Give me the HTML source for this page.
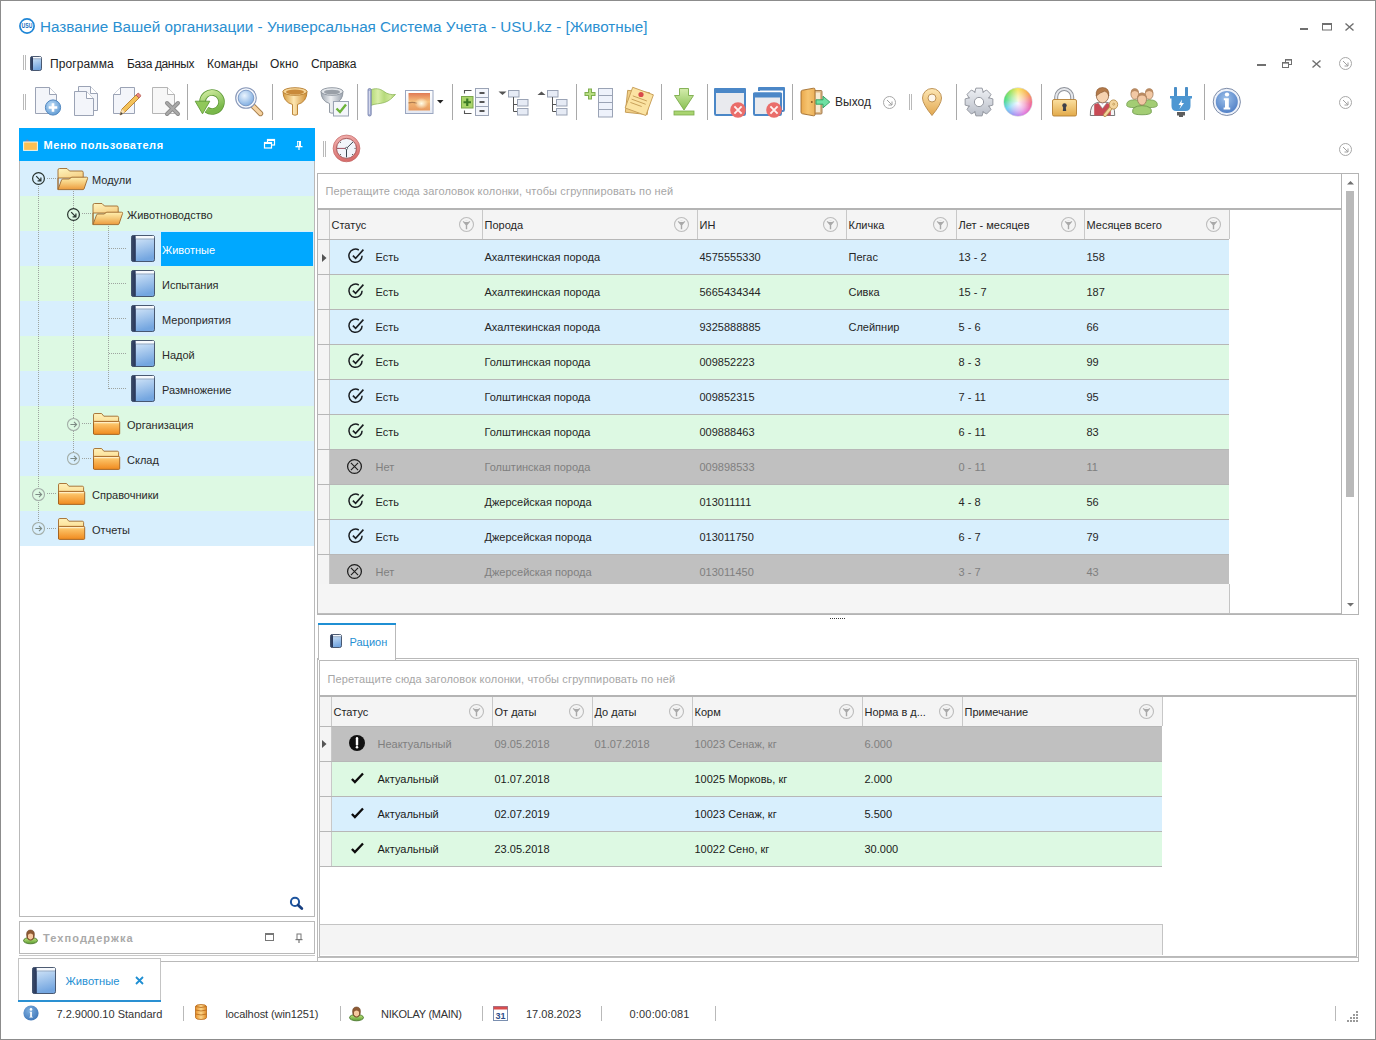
<!DOCTYPE html>
<html><head><meta charset="utf-8"><style>
html,body{margin:0;padding:0;width:1376px;height:1040px;overflow:hidden;background:#fff;}
body{position:relative;font-family:"Liberation Sans",sans-serif;}
.t{position:absolute;white-space:pre;}
svg{overflow:visible}
</style></head><body>
<div style="position:absolute;left:0px;top:0px;width:1376px;height:1040px;background:#fff"></div>
<div style="position:absolute;left:0px;top:0px;width:1376px;height:1px;background:#8c8c8c"></div>
<div style="position:absolute;left:0px;top:1039px;width:1376px;height:1px;background:#8c8c8c"></div>
<div style="position:absolute;left:0px;top:0px;width:1px;height:1040px;background:#8c8c8c"></div>
<div style="position:absolute;left:1375px;top:0px;width:1px;height:1040px;background:#8c8c8c"></div>
<svg style="position:absolute;left:19px;top:18px;" width="16" height="16" viewBox="0 0 16 16"><circle cx="8" cy="8" r="7.1" fill="none" stroke="#1f86d6" stroke-width="1.7"/><text x="2.6" y="10.2" font-family="Liberation Sans" font-weight="bold" font-size="6.6" fill="#1a6ec0" textLength="10.8" lengthAdjust="spacingAndGlyphs">USU</text></svg>
<div class="t" style="left:40px;top:19.09px;font-size:15.25px;line-height:15.25px;color:#2a8fd1;font-weight:normal;">Название Вашей организации - Универсальная Система Учета - USU.kz - [Животные]</div>
<div style="position:absolute;left:1300px;top:28px;width:8px;height:2px;background:#6f6f6f"></div><svg style="position:absolute;left:1322px;top:23px;" width="10" height="8" viewBox="0 0 10 8"><rect x="0.5" y="0.5" width="9" height="6.5" fill="none" stroke="#6f6f6f" stroke-width="1"/><rect x="0" y="0" width="10" height="2" fill="#6f6f6f"/></svg><svg style="position:absolute;left:1345px;top:23px;" width="9" height="8" viewBox="0 0 9 8"><path d="M0.5 0.5L8.5 7.5M8.5 0.5L0.5 7.5" stroke="#6f6f6f" stroke-width="1.4"/></svg>
<div style="position:absolute;left:23px;top:55px;width:1px;height:15px;background:#b9b9b9"></div><div style="position:absolute;left:25px;top:55px;width:1px;height:15px;background:#b9b9b9"></div>
<svg style="position:absolute;left:30px;top:56px;" width="12" height="15" viewBox="0 0 12 15"><defs><linearGradient id="bkmenu" x1="0" y1="0" x2="0.25" y2="1"><stop offset="0" stop-color="#dcecfb"/><stop offset="1" stop-color="#74a6e0"/></linearGradient><linearGradient id="bkmenus" x1="0" y1="0" x2="1" y2="0"><stop offset="0" stop-color="#3a4a68"/><stop offset="1" stop-color="#27365a"/></linearGradient></defs><rect x="0.5" y="0.5" width="11" height="14" rx="1.8" fill="url(#bkmenu)" stroke="#3b4a62" stroke-width="0.9"/><rect x="0.5" y="0.5" width="2.5" height="14" rx="1.2" fill="url(#bkmenus)"/><rect x="3.0" y="1" width="8.0" height="1.5" fill="#f6f9fd"/><path d="M3.0 2.8H11" stroke="#8597ae" stroke-width="0.7"/></svg>
<div class="t" style="left:50px;top:57.84px;font-size:12px;line-height:12px;color:#222222;font-weight:normal;letter-spacing:0.1px">Программа</div>
<div class="t" style="left:127px;top:57.84px;font-size:12px;line-height:12px;color:#222222;font-weight:normal;letter-spacing:-0.4px">База данных</div>
<div class="t" style="left:207px;top:57.84px;font-size:12px;line-height:12px;color:#222222;font-weight:normal;letter-spacing:0px">Команды</div>
<div class="t" style="left:270px;top:57.84px;font-size:12px;line-height:12px;color:#222222;font-weight:normal;letter-spacing:0.15px">Окно</div>
<div class="t" style="left:311px;top:57.84px;font-size:12px;line-height:12px;color:#222222;font-weight:normal;letter-spacing:-0.28px">Справка</div>
<div style="position:absolute;left:1257px;top:64px;width:9px;height:2px;background:#707070"></div><svg style="position:absolute;left:1282px;top:59px;" width="10" height="9" viewBox="0 0 10 9"><rect x="3.5" y="0.5" width="6" height="5" fill="none" stroke="#707070"/><rect x="3" y="0" width="7" height="1.6" fill="#707070"/><rect x="0.5" y="3.5" width="6" height="5" fill="#fff" stroke="#707070"/><rect x="0" y="3" width="7" height="1.6" fill="#707070"/></svg><svg style="position:absolute;left:1312px;top:60px;" width="9" height="8" viewBox="0 0 9 8"><path d="M0.5 0.5L8.5 7.5M8.5 0.5L0.5 7.5" stroke="#707070" stroke-width="1.4"/></svg><svg style="position:absolute;left:1339px;top:57px;" width="13" height="13" viewBox="0 0 13 13"><circle cx="6.5" cy="6.5" r="6" fill="none" stroke="#a8a8a8" stroke-width="1"/><path d="M4 4L9 9M9 5.5V9H5.5" fill="none" stroke="#a0a0a0" stroke-width="1"/></svg>
<div style="position:absolute;left:23px;top:94px;width:1px;height:16px;background:#b9b9b9"></div><div style="position:absolute;left:25px;top:94px;width:1px;height:16px;background:#b9b9b9"></div><svg style="position:absolute;left:34px;top:86px;" width="30" height="31" viewBox="0 0 30 31"><path d="M1.5 1.5H15.5L22.5 8.5V27.5H1.5Z" fill="#f3f5fa" stroke="#9ba3b5" stroke-width="1"/><path d="M15.5 1.5V8.5H22.5" fill="#fff" stroke="#9ba3b5" stroke-width="1"/><defs><radialGradient id="plc" cx="0.4" cy="0.35" r="0.7"><stop offset="0" stop-color="#bcdcf7"/><stop offset="1" stop-color="#5f9ad3"/></radialGradient></defs><circle cx="19" cy="21.5" r="7.6" fill="url(#plc)" stroke="#4f86bf" stroke-width="1"/><path d="M19 17.2V25.8M14.7 21.5H23.3" stroke="#fff" stroke-width="2.6"/></svg><svg style="position:absolute;left:73px;top:85px;" width="28" height="32" viewBox="0 0 28 32"><path d="M5.5 1.5H17.5L24.5 8.5V25.5H5.5Z" fill="#f3f5fa" stroke="#9ba3b5" stroke-width="1"/><path d="M17.5 1.5V8.5H24.5" fill="#fff" stroke="#9ba3b5" stroke-width="1"/><path d="M1.5 6.5H13.5L20.5 13.5V30.5H1.5Z" fill="#f3f5fa" stroke="#9ba3b5" stroke-width="1"/><path d="M13.5 6.5V13.5H20.5" fill="#fff" stroke="#9ba3b5" stroke-width="1"/></svg><svg style="position:absolute;left:112px;top:86px;" width="30" height="32" viewBox="0 0 30 32"><path d="M8.5 1.5H22.5V27.5H1.5V8.5Z" fill="#f3f5fa" stroke="#9ba3b5" stroke-width="1"/><path d="M8.5 1.5V8.5H1.5" fill="#fff" stroke="#9ba3b5" stroke-width="1"/><path d="M8 29L10 23L24 9L27 12L13 26Z" fill="#f3c25a" stroke="#b77c2a" stroke-width="0.9"/><path d="M24 9L27 12L28.5 10.5Q29 9.5 28 8.5L27 7.5Q26 7 25.5 7.5Z" fill="#e8877e" stroke="#b55a52" stroke-width="0.8"/><path d="M8 29L10 23L13 26Z" fill="#f7e0b5"/><path d="M8 29L9 26L11 28Z" fill="#444"/></svg><svg style="position:absolute;left:151px;top:86px;" width="30" height="32" viewBox="0 0 30 32"><path d="M1.5 1.5H16.5L23.5 8.5V27.5H1.5Z" fill="#f7f7f7" stroke="#b5b5b5" stroke-width="1"/><path d="M16.5 1.5V8.5H23.5" fill="#fff" stroke="#b5b5b5" stroke-width="1"/><path d="M16 17L27 28M27 17L16 28" stroke="#8b8b8b" stroke-width="4" stroke-linecap="round"/><path d="M16 17L27 28M27 17L16 28" stroke="#a9a9a9" stroke-width="2.2" stroke-linecap="round"/></svg><div style="position:absolute;left:187px;top:84px;width:1px;height:36px;background:#a9a9a9"></div><svg style="position:absolute;left:194px;top:88px;" width="32" height="29" viewBox="0 0 32 29"><defs><linearGradient id="rfg" x1="0" y1="0" x2="0.4" y2="1"><stop offset="0" stop-color="#cdea9c"/><stop offset="1" stop-color="#79b84a"/></linearGradient></defs><path d="M8.5 14A9.5 9.5 0 1 1 12.6 21.8" fill="none" stroke="#5f9a38" stroke-width="6.6"/><path d="M8.5 14A9.5 9.5 0 1 1 12.6 21.8" fill="none" stroke="url(#rfg)" stroke-width="4.9"/><path d="M1.2 13.2H15.8L8.5 25.8Z" fill="#90c85a" stroke="#5f9a38" stroke-width="0.9" stroke-linejoin="round"/></svg><svg style="position:absolute;left:234px;top:86px;" width="30" height="31" viewBox="0 0 30 31"><defs><radialGradient id="lns" cx="0.4" cy="0.35" r="0.7"><stop offset="0" stop-color="#eaf4fe"/><stop offset="1" stop-color="#7aaae0"/></radialGradient></defs><path d="M18.5 19.5L26.5 27.5" stroke="#a8804e" stroke-width="5.4" stroke-linecap="round"/><path d="M18.5 19.5L26.5 27.5" stroke="#f6d3a2" stroke-width="3.4" stroke-linecap="round"/><circle cx="12" cy="12" r="10.3" fill="#f3f6fb" stroke="#8797b8" stroke-width="1.1"/><circle cx="12" cy="12" r="7.8" fill="url(#lns)" stroke="#6d8dbc" stroke-width="0.8"/></svg><div style="position:absolute;left:272px;top:84px;width:1px;height:36px;background:#a9a9a9"></div><svg style="position:absolute;left:282px;top:87px;" width="26" height="30" viewBox="0 0 26 30"><defs><linearGradient id="fun" x1="0" y1="0" x2="1" y2="0"><stop offset="0" stop-color="#d59a3e"/><stop offset="0.45" stop-color="#fde6b0"/><stop offset="1" stop-color="#cf8e34"/></linearGradient></defs><path d="M1 4.5Q1 15 10.5 17.5V27.5Q13 29 15.5 27.5V17.5Q25 15 25 4.5Z" fill="url(#fun)" stroke="#b47a2c" stroke-width="0.9"/><ellipse cx="13" cy="4.5" rx="12" ry="3.8" fill="#f7d79a" stroke="#b47a2c" stroke-width="0.9"/><ellipse cx="13" cy="5" rx="9" ry="2.4" fill="#c98a3a"/></svg><svg style="position:absolute;left:320px;top:86px;" width="30" height="31" viewBox="0 0 30 31"><defs><linearGradient id="fun2" x1="0" y1="0" x2="1" y2="0"><stop offset="0" stop-color="#9ea6b0"/><stop offset="0.45" stop-color="#eef0f3"/><stop offset="1" stop-color="#9aa2ad"/></linearGradient></defs><path d="M1 5.5Q1 15 9.5 17.5V26.5Q12 28 14.5 26.5V17.5Q23 15 23 5.5Z" fill="url(#fun2)" stroke="#8a929c" stroke-width="0.9"/><ellipse cx="12" cy="5.5" rx="11" ry="3.8" fill="#e4e7eb" stroke="#8a929c" stroke-width="0.9"/><ellipse cx="12" cy="6" rx="8" ry="2.3" fill="#9aa0a8"/><rect x="13.5" y="15.5" width="15" height="14.5" fill="#f4f6fa" stroke="#9aa3b3" stroke-width="1"/><path d="M16.5 22.5L20 26L26 18.5" fill="none" stroke="#6cb33a" stroke-width="2.4"/></svg><div style="position:absolute;left:357px;top:84px;width:1px;height:36px;background:#a9a9a9"></div><svg style="position:absolute;left:366px;top:87px;" width="31" height="30" viewBox="0 0 31 30"><defs><linearGradient id="flg" x1="0" y1="0" x2="1" y2="0"><stop offset="0" stop-color="#b2d874"/><stop offset="0.3" stop-color="#d9eea8"/><stop offset="0.55" stop-color="#b6da7c"/><stop offset="0.8" stop-color="#cfe79a"/><stop offset="1" stop-color="#a5cf68"/></linearGradient></defs><path d="M4.5 3C9 0.8 14 1.5 18 4.5C21 7 25 8 29.5 7.5C26.5 10.5 23.5 14 18.5 15.5C13.5 17 9.5 16.5 4.5 18.5Z" fill="url(#flg)" stroke="#8fb85c" stroke-width="0.8"/><rect x="2" y="1.5" width="3.2" height="27.5" rx="1.5" fill="#a9b2d6" stroke="#6e7aa6" stroke-width="0.8"/><path d="M3.3 4V27" stroke="#e6e9f5" stroke-width="0.9"/></svg><svg style="position:absolute;left:405px;top:90px;" width="29" height="24" viewBox="0 0 29 24"><defs><linearGradient id="img" x1="0" y1="0" x2="0" y2="1"><stop offset="0" stop-color="#e07a56"/><stop offset="0.5" stop-color="#f7c27e"/><stop offset="0.62" stop-color="#f0b070"/><stop offset="1" stop-color="#e89a5e"/></linearGradient><radialGradient id="sun" cx="0.6" cy="0.6" r="0.32"><stop offset="0" stop-color="#fffde8"/><stop offset="1" stop-color="#fffde8" stop-opacity="0"/></radialGradient><linearGradient id="frm" x1="0" y1="0" x2="0" y2="1"><stop offset="0" stop-color="#ffffff"/><stop offset="1" stop-color="#e4e8f2"/></linearGradient></defs><rect x="0.5" y="0.5" width="27.5" height="23" fill="url(#frm)" stroke="#9aa6c0" stroke-width="1"/><rect x="3.5" y="3" width="21.5" height="17.5" fill="url(#img)"/><path d="M3.5 12.8Q8 11.8 12 13.2" stroke="#7a4a30" stroke-width="1.2" fill="none" opacity="0.55"/><rect x="3.5" y="3" width="21.5" height="17.5" fill="url(#sun)"/></svg><svg style="position:absolute;left:437px;top:100px;" width="7" height="4" viewBox="0 0 7 4"><path d="M0 0H6.5L3.25 3.5Z" fill="#222"/></svg><div style="position:absolute;left:452px;top:84px;width:1px;height:36px;background:#a9a9a9"></div><svg style="position:absolute;left:460px;top:87px;" width="30" height="30" viewBox="0 0 30 30"><path d="M11.5 3.5H4.5V6.5M4.5 23.5V26.5H11.5" fill="none" stroke="#555" stroke-width="1.1"/><rect x="1.5" y="9.5" width="11.5" height="11.5" fill="#a9d46a" stroke="#7aa64a" stroke-width="1"/><path d="M7.25 11.5V19M3.5 15.25H11" stroke="#3c7a26" stroke-width="2.2"/><rect x="15.5" y="1.5" width="13" height="27" fill="#f3f5fb" stroke="#9aa3b5" stroke-width="1"/><path d="M15.5 10.5H28.5M15.5 19.5H28.5" stroke="#9aa3b5" stroke-width="1"/><path d="M19.5 6H24.5M19.5 15H24.5M19.5 24H24.5" stroke="#555" stroke-width="1.8"/></svg><svg style="position:absolute;left:498px;top:89px;" width="31" height="27" viewBox="0 0 31 27"><path d="M0.5 2.5H8.5L4.5 6Z" fill="#555"/><rect x="10.5" y="1.5" width="10.5" height="6.5" fill="#e6ebf5" stroke="#9aa3b5" stroke-width="1"/><path d="M15.5 8V22.5M15.5 15.5H19.5M15.5 22.5H19.5" fill="none" stroke="#555" stroke-width="1"/><rect x="19.5" y="10.5" width="10.5" height="6.5" fill="#e6ebf5" stroke="#9aa3b5" stroke-width="1"/><rect x="19.5" y="19.5" width="10.5" height="6.5" fill="#e6ebf5" stroke="#9aa3b5" stroke-width="1"/></svg><svg style="position:absolute;left:537px;top:89px;" width="31" height="27" viewBox="0 0 31 27"><path d="M0.5 6H8.5L4.5 2.5Z" fill="#555"/><rect x="10.5" y="1.5" width="10.5" height="6.5" fill="#e6ebf5" stroke="#9aa3b5" stroke-width="1"/><path d="M15.5 8V22.5M15.5 15.5H19.5M15.5 22.5H19.5" fill="none" stroke="#555" stroke-width="1"/><rect x="19.5" y="10.5" width="10.5" height="6.5" fill="#e6ebf5" stroke="#9aa3b5" stroke-width="1"/><rect x="19.5" y="19.5" width="10.5" height="6.5" fill="#e6ebf5" stroke="#9aa3b5" stroke-width="1"/></svg><div style="position:absolute;left:576px;top:84px;width:1px;height:36px;background:#a9a9a9"></div><svg style="position:absolute;left:583px;top:87px;" width="31" height="31" viewBox="0 0 31 31"><path d="M7 1.5V12.5M1.5 7H12.5" stroke="#7fae4f" stroke-width="4"/><path d="M7 2.5V11.5M2.5 7H11.5" stroke="#b8de82" stroke-width="2"/><rect x="15.5" y="1.5" width="14" height="28.5" fill="#eef2fb" stroke="#9aa3b5" stroke-width="1"/><path d="M15.5 8.5H29.5M15.5 15.5H29.5M15.5 22.5H29.5" stroke="#9aa3b5" stroke-width="1"/></svg><svg style="position:absolute;left:623px;top:87px;" width="31" height="30" viewBox="0 0 31 30"><g transform="rotate(6 15 15)"><rect x="3.5" y="4.5" width="22" height="22" fill="#f1cf86" stroke="#c49a52" stroke-width="0.9"/></g><g transform="rotate(20 15 15)"><rect x="5" y="3" width="22" height="22" fill="#fbe3a2" stroke="#c9a05a" stroke-width="0.9"/><path d="M8 11H23M8 14.5H23M8 18H20" stroke="#c8a15a" stroke-width="0.9"/></g><circle cx="18" cy="7.5" r="2.6" fill="#d94a4a"/></svg><div style="position:absolute;left:661px;top:84px;width:1px;height:36px;background:#a9a9a9"></div><svg style="position:absolute;left:673px;top:87px;" width="22" height="29" viewBox="0 0 22 29"><defs><linearGradient id="dlg" x1="0" y1="0" x2="0" y2="1"><stop offset="0" stop-color="#d4ecac"/><stop offset="1" stop-color="#88c052"/></linearGradient></defs><path d="M6.5 1.5H15.5V8.5H20.5L11 23L1.5 8.5H6.5Z" fill="url(#dlg)" stroke="#7aab4a" stroke-width="0.9" stroke-linejoin="round"/><rect x="1" y="24" width="20" height="4" fill="#a9d470" stroke="#7aab4a" stroke-width="0.8"/></svg><div style="position:absolute;left:707px;top:84px;width:1px;height:36px;background:#a9a9a9"></div><svg style="position:absolute;left:713px;top:87px;" width="34" height="32" viewBox="0 0 34 32"><rect x="2" y="2" width="30" height="26" rx="1.2" fill="#e9eaee" stroke="#4b87c7" stroke-width="2"/><rect x="1" y="1" width="32" height="5" rx="1.2" fill="#4b87c7"/><circle cx="25" cy="23" r="7.8" fill="#ea6d6a"/><path d="M21.4 19.4L28.6 26.6M28.6 19.4L21.4 26.6" stroke="#fff1f0" stroke-width="1.9"/></svg><svg style="position:absolute;left:752px;top:86px;" width="34" height="33" viewBox="0 0 34 33"><rect x="7" y="2" width="25" height="23" rx="1.2" fill="#f4f6fa" stroke="#4b87c7" stroke-width="2"/><rect x="6" y="1" width="27" height="3.5" rx="1.2" fill="#4b87c7"/><rect x="0" y="5" width="31" height="2" fill="#fff"/><rect x="2" y="7.5" width="27" height="21.5" rx="1.2" fill="#e9eaee" stroke="#4b87c7" stroke-width="2"/><rect x="1" y="6.5" width="29" height="5" rx="1.2" fill="#4b87c7"/><circle cx="22" cy="24" r="7.8" fill="#ea6d6a"/><path d="M18.4 20.4L25.6 27.6M25.6 20.4L18.4 27.6" stroke="#fff1f0" stroke-width="1.9"/></svg><div style="position:absolute;left:792px;top:84px;width:1px;height:36px;background:#a9a9a9"></div><svg style="position:absolute;left:799px;top:87px;" width="33" height="30" viewBox="0 0 33 30"><defs><linearGradient id="dor" x1="0" y1="0" x2="1" y2="0"><stop offset="0" stop-color="#e9a84c"/><stop offset="0.5" stop-color="#f6c470"/><stop offset="1" stop-color="#eab05a"/></linearGradient></defs><rect x="14.5" y="3.5" width="8.5" height="23.5" rx="1" fill="#dcb98a" stroke="#9e7444" stroke-width="0.9"/><rect x="16.5" y="5.5" width="4.5" height="19.5" fill="#f7ead2"/><path d="M2 5Q2 3.5 3.5 3.2L14.5 1.2Q16 1 16 2.5V27.5Q16 29 14.5 28.8L3.5 26.8Q2 26.5 2 25Z" fill="url(#dor)" stroke="#a06c2c" stroke-width="0.9"/><circle cx="12.8" cy="15" r="1" fill="#8a5a24"/><path d="M17 12.8H24V9.2L30.8 15L24 20.8V17.2H17Z" fill="#6fe0a2" stroke="#2e9c5e" stroke-width="0.9" stroke-linejoin="round"/></svg><div class="t" style="left:835px;top:95.84px;font-size:12px;line-height:12px;color:#2a2a2a;font-weight:normal;">Выход</div><svg style="position:absolute;left:883px;top:96px;" width="13" height="13" viewBox="0 0 13 13"><circle cx="6.5" cy="6.5" r="6" fill="none" stroke="#a8a8a8" stroke-width="1"/><path d="M4 4L9 9M9 5.5V9H5.5" fill="none" stroke="#a0a0a0" stroke-width="1"/></svg><div style="position:absolute;left:909px;top:94px;width:1px;height:16px;background:#b9b9b9"></div><div style="position:absolute;left:911px;top:94px;width:1px;height:16px;background:#b9b9b9"></div><svg style="position:absolute;left:921px;top:87px;" width="23" height="30" viewBox="0 0 23 30"><defs><linearGradient id="ping" x1="0" y1="0" x2="0" y2="1"><stop offset="0" stop-color="#fde7b4"/><stop offset="1" stop-color="#e2a74f"/></linearGradient></defs><path d="M11 28.5Q1.5 17 1.5 11A9.5 9.5 0 0 1 20.5 11Q20.5 17 11 28.5Z" fill="url(#ping)" stroke="#b88a4a" stroke-width="0.9"/><circle cx="11" cy="11" r="4" fill="#fdf6ea" stroke="#b88a4a" stroke-width="0.9"/></svg><div style="position:absolute;left:956px;top:84px;width:1px;height:36px;background:#a9a9a9"></div><svg style="position:absolute;left:964px;top:87px;" width="30" height="30" viewBox="0 0 30 30"><defs><linearGradient id="gr" x1="0" y1="0" x2="0" y2="1"><stop offset="0" stop-color="#eef0f4"/><stop offset="1" stop-color="#b9bec8"/></linearGradient></defs><path d="M28.86 11.90L28.86 18.10L24.59 19.28L24.81 18.75L26.99 22.61L22.61 26.99L18.75 24.81L19.28 24.59L18.10 28.86L11.90 28.86L10.72 24.59L11.25 24.81L7.39 26.99L3.01 22.61L5.19 18.75L5.41 19.28L1.14 18.10L1.14 11.90L5.41 10.72L5.19 11.25L3.01 7.39L7.39 3.01L11.25 5.19L10.72 5.41L11.90 1.14L18.10 1.14L19.28 5.41L18.75 5.19L22.61 3.01L26.99 7.39L24.81 11.25L24.59 10.72Z" fill="url(#gr)" stroke="#8c9099" stroke-width="0.9" stroke-linejoin="round"/><circle cx="15" cy="15" r="4.6" fill="#fff" stroke="#8c9099" stroke-width="0.9"/></svg><div style="position:absolute;left:1004px;top:88px;width:28px;height:28px;border-radius:50%;background:radial-gradient(circle at 50% 55%, rgba(255,255,255,0.95) 0, rgba(255,255,255,0.55) 35%, rgba(255,255,255,0) 72%), conic-gradient(from 0deg, #f9e45a, #f7a24a 50deg, #ec4f8c 100deg, #d85ad6 150deg, #8a7cf0 200deg, #4cc6f0 240deg, #3ad873 280deg, #8ee05a 320deg, #f9e45a);box-shadow:0 0 0 0.5px #c9c9d2"></div><div style="position:absolute;left:1041px;top:84px;width:1px;height:36px;background:#a9a9a9"></div><svg style="position:absolute;left:1051px;top:86px;" width="27" height="31" viewBox="0 0 27 31"><defs><linearGradient id="lk" x1="0" y1="0" x2="0" y2="1"><stop offset="0" stop-color="#fbe0a0"/><stop offset="1" stop-color="#e2aa4a"/></linearGradient></defs><path d="M5.2 14V11A8 8 0 0 1 21.2 11V14" fill="none" stroke="#8e929a" stroke-width="4"/><path d="M5.2 14V11A8 8 0 0 1 21.2 11V14" fill="none" stroke="#e6e8ec" stroke-width="2"/><rect x="1.5" y="13.5" width="24" height="16.5" rx="1.5" fill="url(#lk)" stroke="#b47f34" stroke-width="0.9"/><circle cx="13.5" cy="19.5" r="2.2" fill="#3d3f48"/><path d="M12.3 20H14.7L15.2 25H11.8Z" fill="#3d3f48"/></svg><svg style="position:absolute;left:1089px;top:86px;" width="31" height="31" viewBox="0 0 31 31"><path d="M1.3 29.5Q1 19 7 17Q10 16 13.5 16Q17 16 20 17Q26 19 25.7 29.5Z" fill="#f4f4f4" stroke="#6a6a6a" stroke-width="0.9"/><path d="M5.2 29.5V18.5Q9 16.5 13.5 16.5Q18 16.5 21.8 18.5V29.5Z" fill="#c84a55"/><path d="M9 16.8L13.5 22.5L18 16.8Q13.5 15.5 9 16.8Z" fill="#ffffff" stroke="#8a8a8a" stroke-width="0.6"/><path d="M11.5 16.3L13.5 19L15.5 16.3Z" fill="#d9d0e8"/><ellipse cx="13.5" cy="9.5" rx="6.2" ry="7.3" fill="#f6d2b0" stroke="#8f6446" stroke-width="0.8"/><path d="M7.3 10Q6.2 1.6 13.5 1.6Q20.8 1.6 19.7 10Q19 5.6 15.5 5.2Q11 6.5 7.3 10Z" fill="#b47a4a" stroke="#8a5a34" stroke-width="0.6"/><path d="M16 29L23 20.5" stroke="#b8904e" stroke-width="3.8" stroke-linecap="round"/><path d="M16 29L23 20.5" stroke="#f3d49c" stroke-width="2.2" stroke-linecap="round"/><ellipse cx="24.5" cy="18.5" rx="4.2" ry="4.6" fill="#f3d49c" stroke="#b8904e" stroke-width="0.9"/><circle cx="24.7" cy="18.2" r="1" fill="none" stroke="#b8904e" stroke-width="0.7"/></svg><svg style="position:absolute;left:1126px;top:87px;" width="32" height="29" viewBox="0 0 32 29"><g transform="translate(8.8 10) scale(0.85)"><path d="M-9.5 10Q-10.5 3.5 0 3.2Q10.5 3.5 9.5 10Q9 12.5 0 12.5Q-9 12.5 -9.5 10Z" fill="#a3cd74" stroke="#6f9b4c" stroke-width="0.9"/><ellipse cx="0" cy="-3.5" rx="4.6" ry="6.2" fill="#f2c8a4" stroke="#9a7658" stroke-width="0.8"/><path d="M-4.6 -4Q-5.2 -10 0 -10Q5.2 -10 4.6 -4Q3.5 -7.2 0 -7.2Q-3.5 -7.2 -4.6 -4Z" fill="#b98a62"/></g><g transform="translate(23.2 10) scale(0.85)"><path d="M-9.5 10Q-10.5 3.5 0 3.2Q10.5 3.5 9.5 10Q9 12.5 0 12.5Q-9 12.5 -9.5 10Z" fill="#a3cd74" stroke="#6f9b4c" stroke-width="0.9"/><ellipse cx="0" cy="-3.5" rx="4.6" ry="6.2" fill="#f2c8a4" stroke="#9a7658" stroke-width="0.8"/><path d="M-4.6 -4Q-5.2 -10 0 -10Q5.2 -10 4.6 -4Q3.5 -7.2 0 -7.2Q-3.5 -7.2 -4.6 -4Z" fill="#b98a62"/></g><g transform="translate(16 15.5) scale(0.98)"><path d="M-9.5 10Q-10.5 3.5 0 3.2Q10.5 3.5 9.5 10Q9 12.5 0 12.5Q-9 12.5 -9.5 10Z" fill="#a3cd74" stroke="#6f9b4c" stroke-width="0.9"/><ellipse cx="0" cy="-3.5" rx="4.6" ry="6.2" fill="#f2c8a4" stroke="#9a7658" stroke-width="0.8"/><path d="M-4.6 -4Q-5.2 -10 0 -10Q5.2 -10 4.6 -4Q3.5 -7.2 0 -7.2Q-3.5 -7.2 -4.6 -4Z" fill="#b98a62"/></g></svg><svg style="position:absolute;left:1169px;top:86px;" width="24" height="32" viewBox="0 0 24 32"><rect x="5" y="1" width="3" height="10" rx="0.8" fill="#4a8ec7"/><rect x="16" y="1" width="3" height="10" rx="0.8" fill="#4a8ec7"/><path d="M1 10H23V12.5H21.5V20Q21.5 25 16.5 25H7.5Q2.5 25 2.5 20V12.5H1Z" fill="#4e97d2"/><path d="M13 13.5L9.5 19H12L10.5 23L15 17H12.5Z" fill="#fff"/><rect x="8" y="26" width="8" height="3.5" fill="#5d5d5d"/><rect x="10" y="29" width="4" height="2" fill="#5d5d5d"/></svg><div style="position:absolute;left:1204px;top:84px;width:1px;height:36px;background:#a9a9a9"></div><svg style="position:absolute;left:1212px;top:87px;" width="30" height="30" viewBox="0 0 30 30"><defs><radialGradient id="inf" cx="0.45" cy="0.35" r="0.7"><stop offset="0" stop-color="#9cc0ea"/><stop offset="1" stop-color="#4e7dc4"/></radialGradient></defs><circle cx="14.8" cy="14.9" r="13.6" fill="#eef2fa" stroke="#7d8ca8" stroke-width="1"/><circle cx="14.8" cy="14.9" r="11" fill="url(#inf)"/><ellipse cx="15" cy="7.6" rx="2.2" ry="2" fill="#fff"/><path d="M11.8 11.2H16.8V20.5H18.2V22.5H11.6V20.5H13V13.2H11.8Z" fill="#fff"/></svg><svg style="position:absolute;left:1339px;top:96px;" width="13" height="13" viewBox="0 0 13 13"><circle cx="6.5" cy="6.5" r="6" fill="none" stroke="#a8a8a8" stroke-width="1"/><path d="M4 4L9 9M9 5.5V9H5.5" fill="none" stroke="#a0a0a0" stroke-width="1"/></svg>
<div style="position:absolute;left:19px;top:128px;width:296px;height:789px;box-sizing:border-box;border:1px solid #b9b9b9;background:#fff"></div><div style="position:absolute;left:19px;top:128px;width:296px;height:33px;background:#00a8ff"></div><svg style="position:absolute;left:23px;top:138px;" width="15" height="13" viewBox="0 0 15 13"><path d="M1 4.2L4.2 1.2L8 4.2Z" fill="#8a7aa0" opacity="0.8"/><rect x="0.6" y="4" width="13.8" height="8.4" fill="#fbc054" stroke="#f4f6e8" stroke-width="1"/></svg><div class="t" style="left:43.5px;top:139.69px;font-size:11px;line-height:11px;color:#ffffff;font-weight:bold;letter-spacing:0.55px">Меню пользователя</div><svg style="position:absolute;left:264px;top:139px;" width="11" height="10" viewBox="0 0 11 10"><rect x="3.5" y="0.5" width="7" height="5.5" fill="none" stroke="#fff" stroke-width="1.2"/><rect x="0.5" y="3.5" width="7" height="5.5" fill="#00a8ff" stroke="#fff" stroke-width="1.2"/><rect x="0" y="3" width="8" height="2" fill="#fff"/><rect x="3" y="0" width="8" height="2" fill="#fff"/></svg><svg style="position:absolute;left:295px;top:141px;" width="8" height="9" viewBox="0 0 8 9"><rect x="2" y="0" width="4" height="5.5" fill="#fff"/><rect x="0.5" y="5" width="7" height="1.3" fill="#fff"/><rect x="3.4" y="6" width="1.2" height="3" fill="#fff"/><rect x="2.8" y="0.8" width="1" height="4" fill="#00a8ff"/></svg><div style="position:absolute;left:20px;top:161px;width:294px;height:35px;background:#d8effd"></div><div style="position:absolute;left:20px;top:196px;width:294px;height:35px;background:#ddf9e3"></div><div style="position:absolute;left:20px;top:231px;width:294px;height:35px;background:#d8effd"></div><div style="position:absolute;left:20px;top:266px;width:294px;height:35px;background:#ddf9e3"></div><div style="position:absolute;left:20px;top:301px;width:294px;height:35px;background:#d8effd"></div><div style="position:absolute;left:20px;top:336px;width:294px;height:35px;background:#ddf9e3"></div><div style="position:absolute;left:20px;top:371px;width:294px;height:35px;background:#d8effd"></div><div style="position:absolute;left:20px;top:406px;width:294px;height:35px;background:#ddf9e3"></div><div style="position:absolute;left:20px;top:441px;width:294px;height:35px;background:#d8effd"></div><div style="position:absolute;left:20px;top:476px;width:294px;height:35px;background:#ddf9e3"></div><div style="position:absolute;left:20px;top:511px;width:294px;height:35px;background:#d8effd"></div><div style="position:absolute;left:38px;top:186px;width:1px;height:344px;background:repeating-linear-gradient(to bottom,#9ea4a0 0 1px,transparent 1px 2px)"></div><div style="position:absolute;left:73px;top:191px;width:1px;height:269px;background:repeating-linear-gradient(to bottom,#9ea4a0 0 1px,transparent 1px 2px)"></div><div style="position:absolute;left:108px;top:226px;width:1px;height:164px;background:repeating-linear-gradient(to bottom,#9ea4a0 0 1px,transparent 1px 2px)"></div><svg style="position:absolute;left:32px;top:172px;" width="13" height="13" viewBox="0 0 13 13"><circle cx="6.5" cy="6.5" r="5.9" fill="#d8effd" stroke="#27332e" stroke-width="1.2"/><path d="M4.2 4.2L8.8 8.8M8.9 5.6V8.9H5.6" fill="none" stroke="#27332e" stroke-width="1.2"/></svg><div style="position:absolute;left:47px;top:178px;width:10px;height:1px;background:repeating-linear-gradient(to right,#9ea4a0 0 1px,transparent 1px 2px)"></div><svg style="position:absolute;left:57px;top:168px;" width="31" height="23" viewBox="0 0 31 23"><defs><linearGradient id="fo1" x1="0" y1="0" x2="0.3" y2="1"><stop offset="0" stop-color="#fff6c0"/><stop offset="1" stop-color="#f0b860"/></linearGradient><linearGradient id="fo2" x1="0" y1="0" x2="0" y2="1"><stop offset="0" stop-color="#fff0b0"/><stop offset="0.5" stop-color="#f5c978"/><stop offset="1" stop-color="#ec9a3c"/></linearGradient></defs><path d="M1 21.5V2Q1 0.5 2.5 0.5H10L12.5 3H25Q26.2 3 26.2 4.5V10H1Z" fill="url(#fo1)" stroke="#9e6a2e" stroke-width="0.9"/><path d="M1 21.5L4.6 11.8Q5 11 6 11H12L14.8 9.2H29.6Q30.9 9.2 30.6 10.4L27 21Q26.7 21.6 26 21.6H1Z" fill="url(#fo2)" stroke="#9e6a2e" stroke-width="0.9" stroke-linejoin="round"/></svg><div class="t" style="left:92px;top:174.69px;font-size:11px;line-height:11px;color:#2a2a2a;font-weight:normal;">Модули</div><svg style="position:absolute;left:67px;top:208px;" width="13" height="13" viewBox="0 0 13 13"><circle cx="6.5" cy="6.5" r="5.9" fill="#ddf9e3" stroke="#27332e" stroke-width="1.2"/><path d="M4.2 4.2L8.8 8.8M8.9 5.6V8.9H5.6" fill="none" stroke="#27332e" stroke-width="1.2"/></svg><div style="position:absolute;left:82px;top:213px;width:10px;height:1px;background:repeating-linear-gradient(to right,#9ea4a0 0 1px,transparent 1px 2px)"></div><svg style="position:absolute;left:92px;top:203px;" width="31" height="23" viewBox="0 0 31 23"><defs><linearGradient id="fo1" x1="0" y1="0" x2="0.3" y2="1"><stop offset="0" stop-color="#fff6c0"/><stop offset="1" stop-color="#f0b860"/></linearGradient><linearGradient id="fo2" x1="0" y1="0" x2="0" y2="1"><stop offset="0" stop-color="#fff0b0"/><stop offset="0.5" stop-color="#f5c978"/><stop offset="1" stop-color="#ec9a3c"/></linearGradient></defs><path d="M1 21.5V2Q1 0.5 2.5 0.5H10L12.5 3H25Q26.2 3 26.2 4.5V10H1Z" fill="url(#fo1)" stroke="#9e6a2e" stroke-width="0.9"/><path d="M1 21.5L4.6 11.8Q5 11 6 11H12L14.8 9.2H29.6Q30.9 9.2 30.6 10.4L27 21Q26.7 21.6 26 21.6H1Z" fill="url(#fo2)" stroke="#9e6a2e" stroke-width="0.9" stroke-linejoin="round"/></svg><div class="t" style="left:127px;top:209.69px;font-size:11px;line-height:11px;color:#2a2a2a;font-weight:normal;">Животноводство</div><div style="position:absolute;left:109px;top:248px;width:18px;height:1px;background:repeating-linear-gradient(to right,#9ea4a0 0 1px,transparent 1px 2px)"></div><svg style="position:absolute;left:131px;top:235px;" width="24" height="27" viewBox="0 0 24 27"><defs><linearGradient id="bkt2" x1="0" y1="0" x2="0.25" y2="1"><stop offset="0" stop-color="#dcecfb"/><stop offset="1" stop-color="#74a6e0"/></linearGradient><linearGradient id="bkt2s" x1="0" y1="0" x2="1" y2="0"><stop offset="0" stop-color="#3a4a68"/><stop offset="1" stop-color="#27365a"/></linearGradient></defs><rect x="0.5" y="0.5" width="23" height="26" rx="1.8" fill="url(#bkt2)" stroke="#3b4a62" stroke-width="0.9"/><rect x="0.5" y="0.5" width="4.3" height="26" rx="1.2" fill="url(#bkt2s)"/><rect x="4.8" y="1" width="18.2" height="2.7" fill="#f6f9fd"/><path d="M4.8 4.0H23" stroke="#8597ae" stroke-width="0.7"/></svg><div style="position:absolute;left:161px;top:232px;width:152px;height:34px;background:#00a8ff"></div><div class="t" style="left:162px;top:244.69px;font-size:11px;line-height:11px;color:#ffffff;font-weight:normal;">Животные</div><div style="position:absolute;left:109px;top:283px;width:18px;height:1px;background:repeating-linear-gradient(to right,#9ea4a0 0 1px,transparent 1px 2px)"></div><svg style="position:absolute;left:131px;top:270px;" width="24" height="27" viewBox="0 0 24 27"><defs><linearGradient id="bkt3" x1="0" y1="0" x2="0.25" y2="1"><stop offset="0" stop-color="#dcecfb"/><stop offset="1" stop-color="#74a6e0"/></linearGradient><linearGradient id="bkt3s" x1="0" y1="0" x2="1" y2="0"><stop offset="0" stop-color="#3a4a68"/><stop offset="1" stop-color="#27365a"/></linearGradient></defs><rect x="0.5" y="0.5" width="23" height="26" rx="1.8" fill="url(#bkt3)" stroke="#3b4a62" stroke-width="0.9"/><rect x="0.5" y="0.5" width="4.3" height="26" rx="1.2" fill="url(#bkt3s)"/><rect x="4.8" y="1" width="18.2" height="2.7" fill="#f6f9fd"/><path d="M4.8 4.0H23" stroke="#8597ae" stroke-width="0.7"/></svg><div class="t" style="left:162px;top:279.69px;font-size:11px;line-height:11px;color:#2a2a2a;font-weight:normal;">Испытания</div><div style="position:absolute;left:109px;top:318px;width:18px;height:1px;background:repeating-linear-gradient(to right,#9ea4a0 0 1px,transparent 1px 2px)"></div><svg style="position:absolute;left:131px;top:305px;" width="24" height="27" viewBox="0 0 24 27"><defs><linearGradient id="bkt4" x1="0" y1="0" x2="0.25" y2="1"><stop offset="0" stop-color="#dcecfb"/><stop offset="1" stop-color="#74a6e0"/></linearGradient><linearGradient id="bkt4s" x1="0" y1="0" x2="1" y2="0"><stop offset="0" stop-color="#3a4a68"/><stop offset="1" stop-color="#27365a"/></linearGradient></defs><rect x="0.5" y="0.5" width="23" height="26" rx="1.8" fill="url(#bkt4)" stroke="#3b4a62" stroke-width="0.9"/><rect x="0.5" y="0.5" width="4.3" height="26" rx="1.2" fill="url(#bkt4s)"/><rect x="4.8" y="1" width="18.2" height="2.7" fill="#f6f9fd"/><path d="M4.8 4.0H23" stroke="#8597ae" stroke-width="0.7"/></svg><div class="t" style="left:162px;top:314.69px;font-size:11px;line-height:11px;color:#2a2a2a;font-weight:normal;">Мероприятия</div><div style="position:absolute;left:109px;top:353px;width:18px;height:1px;background:repeating-linear-gradient(to right,#9ea4a0 0 1px,transparent 1px 2px)"></div><svg style="position:absolute;left:131px;top:340px;" width="24" height="27" viewBox="0 0 24 27"><defs><linearGradient id="bkt5" x1="0" y1="0" x2="0.25" y2="1"><stop offset="0" stop-color="#dcecfb"/><stop offset="1" stop-color="#74a6e0"/></linearGradient><linearGradient id="bkt5s" x1="0" y1="0" x2="1" y2="0"><stop offset="0" stop-color="#3a4a68"/><stop offset="1" stop-color="#27365a"/></linearGradient></defs><rect x="0.5" y="0.5" width="23" height="26" rx="1.8" fill="url(#bkt5)" stroke="#3b4a62" stroke-width="0.9"/><rect x="0.5" y="0.5" width="4.3" height="26" rx="1.2" fill="url(#bkt5s)"/><rect x="4.8" y="1" width="18.2" height="2.7" fill="#f6f9fd"/><path d="M4.8 4.0H23" stroke="#8597ae" stroke-width="0.7"/></svg><div class="t" style="left:162px;top:349.69px;font-size:11px;line-height:11px;color:#2a2a2a;font-weight:normal;">Надой</div><div style="position:absolute;left:109px;top:388px;width:18px;height:1px;background:repeating-linear-gradient(to right,#9ea4a0 0 1px,transparent 1px 2px)"></div><svg style="position:absolute;left:131px;top:375px;" width="24" height="27" viewBox="0 0 24 27"><defs><linearGradient id="bkt6" x1="0" y1="0" x2="0.25" y2="1"><stop offset="0" stop-color="#dcecfb"/><stop offset="1" stop-color="#74a6e0"/></linearGradient><linearGradient id="bkt6s" x1="0" y1="0" x2="1" y2="0"><stop offset="0" stop-color="#3a4a68"/><stop offset="1" stop-color="#27365a"/></linearGradient></defs><rect x="0.5" y="0.5" width="23" height="26" rx="1.8" fill="url(#bkt6)" stroke="#3b4a62" stroke-width="0.9"/><rect x="0.5" y="0.5" width="4.3" height="26" rx="1.2" fill="url(#bkt6s)"/><rect x="4.8" y="1" width="18.2" height="2.7" fill="#f6f9fd"/><path d="M4.8 4.0H23" stroke="#8597ae" stroke-width="0.7"/></svg><div class="t" style="left:162px;top:384.69px;font-size:11px;line-height:11px;color:#2a2a2a;font-weight:normal;">Размножение</div><svg style="position:absolute;left:67px;top:418px;" width="13" height="13" viewBox="0 0 13 13"><circle cx="6.5" cy="6.5" r="6" fill="#ddf9e3" stroke="#a3aea8" stroke-width="1.1"/><path d="M3.4 6.5H9.6M7 3.9L9.6 6.5L7 9.1" fill="none" stroke="#7d8a84" stroke-width="1.1"/></svg><div style="position:absolute;left:82px;top:423px;width:10px;height:1px;background:repeating-linear-gradient(to right,#9ea4a0 0 1px,transparent 1px 2px)"></div><svg style="position:absolute;left:92px;top:413px;" width="29" height="23" viewBox="0 0 29 23"><defs><linearGradient id="fc1" x1="0" y1="0" x2="0" y2="1"><stop offset="0" stop-color="#fff1b8"/><stop offset="1" stop-color="#f6c86a"/></linearGradient><linearGradient id="fc2" x1="0" y1="0" x2="0" y2="1"><stop offset="0" stop-color="#ffe7a8"/><stop offset="0.25" stop-color="#fbbf62"/><stop offset="1" stop-color="#f08a1e"/></linearGradient></defs><path d="M1.5 21V1.8Q1.5 0.5 2.8 0.5H9.6L11.8 3.2H25.3Q26.6 3.2 26.6 4.5V9H1.5Z" fill="url(#fc1)" stroke="#a36a2a" stroke-width="0.9"/><rect x="1.5" y="8.4" width="26.2" height="13" rx="1" fill="url(#fc2)" stroke="#a0601e" stroke-width="0.9"/><path d="M2.5 9.6H26.7" stroke="#fff5d6" stroke-width="0.8"/></svg><div class="t" style="left:127px;top:419.69px;font-size:11px;line-height:11px;color:#2a2a2a;font-weight:normal;">Организация</div><svg style="position:absolute;left:67px;top:452px;" width="13" height="13" viewBox="0 0 13 13"><circle cx="6.5" cy="6.5" r="6" fill="#d8effd" stroke="#a3aea8" stroke-width="1.1"/><path d="M3.4 6.5H9.6M7 3.9L9.6 6.5L7 9.1" fill="none" stroke="#7d8a84" stroke-width="1.1"/></svg><div style="position:absolute;left:82px;top:458px;width:10px;height:1px;background:repeating-linear-gradient(to right,#9ea4a0 0 1px,transparent 1px 2px)"></div><svg style="position:absolute;left:92px;top:448px;" width="29" height="23" viewBox="0 0 29 23"><defs><linearGradient id="fc1" x1="0" y1="0" x2="0" y2="1"><stop offset="0" stop-color="#fff1b8"/><stop offset="1" stop-color="#f6c86a"/></linearGradient><linearGradient id="fc2" x1="0" y1="0" x2="0" y2="1"><stop offset="0" stop-color="#ffe7a8"/><stop offset="0.25" stop-color="#fbbf62"/><stop offset="1" stop-color="#f08a1e"/></linearGradient></defs><path d="M1.5 21V1.8Q1.5 0.5 2.8 0.5H9.6L11.8 3.2H25.3Q26.6 3.2 26.6 4.5V9H1.5Z" fill="url(#fc1)" stroke="#a36a2a" stroke-width="0.9"/><rect x="1.5" y="8.4" width="26.2" height="13" rx="1" fill="url(#fc2)" stroke="#a0601e" stroke-width="0.9"/><path d="M2.5 9.6H26.7" stroke="#fff5d6" stroke-width="0.8"/></svg><div class="t" style="left:127px;top:454.69px;font-size:11px;line-height:11px;color:#2a2a2a;font-weight:normal;">Склад</div><svg style="position:absolute;left:32px;top:488px;" width="13" height="13" viewBox="0 0 13 13"><circle cx="6.5" cy="6.5" r="6" fill="#ddf9e3" stroke="#a3aea8" stroke-width="1.1"/><path d="M3.4 6.5H9.6M7 3.9L9.6 6.5L7 9.1" fill="none" stroke="#7d8a84" stroke-width="1.1"/></svg><div style="position:absolute;left:47px;top:493px;width:10px;height:1px;background:repeating-linear-gradient(to right,#9ea4a0 0 1px,transparent 1px 2px)"></div><svg style="position:absolute;left:57px;top:483px;" width="29" height="23" viewBox="0 0 29 23"><defs><linearGradient id="fc1" x1="0" y1="0" x2="0" y2="1"><stop offset="0" stop-color="#fff1b8"/><stop offset="1" stop-color="#f6c86a"/></linearGradient><linearGradient id="fc2" x1="0" y1="0" x2="0" y2="1"><stop offset="0" stop-color="#ffe7a8"/><stop offset="0.25" stop-color="#fbbf62"/><stop offset="1" stop-color="#f08a1e"/></linearGradient></defs><path d="M1.5 21V1.8Q1.5 0.5 2.8 0.5H9.6L11.8 3.2H25.3Q26.6 3.2 26.6 4.5V9H1.5Z" fill="url(#fc1)" stroke="#a36a2a" stroke-width="0.9"/><rect x="1.5" y="8.4" width="26.2" height="13" rx="1" fill="url(#fc2)" stroke="#a0601e" stroke-width="0.9"/><path d="M2.5 9.6H26.7" stroke="#fff5d6" stroke-width="0.8"/></svg><div class="t" style="left:92px;top:489.69px;font-size:11px;line-height:11px;color:#2a2a2a;font-weight:normal;">Справочники</div><svg style="position:absolute;left:32px;top:522px;" width="13" height="13" viewBox="0 0 13 13"><circle cx="6.5" cy="6.5" r="6" fill="#d8effd" stroke="#a3aea8" stroke-width="1.1"/><path d="M3.4 6.5H9.6M7 3.9L9.6 6.5L7 9.1" fill="none" stroke="#7d8a84" stroke-width="1.1"/></svg><div style="position:absolute;left:47px;top:528px;width:10px;height:1px;background:repeating-linear-gradient(to right,#9ea4a0 0 1px,transparent 1px 2px)"></div><svg style="position:absolute;left:57px;top:518px;" width="29" height="23" viewBox="0 0 29 23"><defs><linearGradient id="fc1" x1="0" y1="0" x2="0" y2="1"><stop offset="0" stop-color="#fff1b8"/><stop offset="1" stop-color="#f6c86a"/></linearGradient><linearGradient id="fc2" x1="0" y1="0" x2="0" y2="1"><stop offset="0" stop-color="#ffe7a8"/><stop offset="0.25" stop-color="#fbbf62"/><stop offset="1" stop-color="#f08a1e"/></linearGradient></defs><path d="M1.5 21V1.8Q1.5 0.5 2.8 0.5H9.6L11.8 3.2H25.3Q26.6 3.2 26.6 4.5V9H1.5Z" fill="url(#fc1)" stroke="#a36a2a" stroke-width="0.9"/><rect x="1.5" y="8.4" width="26.2" height="13" rx="1" fill="url(#fc2)" stroke="#a0601e" stroke-width="0.9"/><path d="M2.5 9.6H26.7" stroke="#fff5d6" stroke-width="0.8"/></svg><div class="t" style="left:92px;top:524.69px;font-size:11px;line-height:11px;color:#2a2a2a;font-weight:normal;">Отчеты</div><svg style="position:absolute;left:289px;top:896px;" width="15" height="15" viewBox="0 0 15 15"><circle cx="6" cy="5.9" r="4.1" fill="none" stroke="#1d549e" stroke-width="2"/><path d="M9 9L12.8 12.6" stroke="#173f80" stroke-width="2.8" stroke-linecap="round"/></svg><div style="position:absolute;left:19px;top:921px;width:296px;height:33px;box-sizing:border-box;border:1px solid #b9b9b9;background:#fff"></div><div style="position:absolute;left:19px;top:955px;width:296px;height:1px;background:#c8c8c8"></div><svg style="position:absolute;left:23px;top:929px;" width="15" height="15" viewBox="0 0 15 15"><g transform="scale(1.0)"><defs><linearGradient id="usg" x1="0" y1="0" x2="0" y2="1"><stop offset="0" stop-color="#c8ec86"/><stop offset="1" stop-color="#5c9a30"/></linearGradient></defs><ellipse cx="7.5" cy="11.6" rx="7" ry="3.2" fill="url(#usg)" stroke="#3f6e22" stroke-width="0.8"/><path d="M3.6 5.5Q3.6 1 7.5 1Q11.4 1 11.4 5.5Q11.4 8.5 10.2 10Q8.8 11.2 7.5 11.2Q6.2 11.2 4.8 10Q3.6 8.5 3.6 5.5Z" fill="#8e5a34" stroke="#6b4426" stroke-width="0.6"/><path d="M5 6Q5.5 4.6 7.5 4.4Q9.6 4.6 10 6V8.5Q9 10.5 7.5 10.6Q6 10.5 5 8.5Z" fill="#f6c9a0"/></g></svg><div class="t" style="left:43px;top:932.69px;font-size:11px;line-height:11px;color:#a9a9a9;font-weight:bold;letter-spacing:1.1px">Техподдержка</div><svg style="position:absolute;left:265px;top:933px;" width="9" height="8" viewBox="0 0 9 8"><rect x="0.5" y="0.5" width="8" height="7" fill="none" stroke="#777" stroke-width="1"/><rect x="0" y="0" width="9" height="2" fill="#777"/></svg><svg style="position:absolute;left:295px;top:934px;" width="8" height="9" viewBox="0 0 8 9"><rect x="2" y="0" width="4" height="5.5" fill="none" stroke="#777" stroke-width="1"/><rect x="0.5" y="5" width="7" height="1.2" fill="#777"/><rect x="3.4" y="6" width="1.2" height="3" fill="#777"/></svg>
<div style="position:absolute;left:323px;top:141px;width:1px;height:16px;background:#b9b9b9"></div><div style="position:absolute;left:325px;top:141px;width:1px;height:16px;background:#b9b9b9"></div>
<svg style="position:absolute;left:332px;top:134px;" width="29" height="29" viewBox="0 0 29 29"><defs><linearGradient id="clk" x1="0" y1="0" x2="0.3" y2="1"><stop offset="0" stop-color="#f4b6b4"/><stop offset="1" stop-color="#d86e6c"/></linearGradient></defs><circle cx="14.5" cy="14.4" r="13.4" fill="url(#clk)" stroke="#c26664" stroke-width="0.7"/><circle cx="14.5" cy="14.4" r="10" fill="#f2f5fa" stroke="#9c4f50" stroke-width="0.9"/><circle cx="23.10" cy="14.40" r="0.55" fill="#3a3a3a"/><circle cx="20.58" cy="20.48" r="0.55" fill="#3a3a3a"/><circle cx="8.42" cy="20.48" r="0.55" fill="#3a3a3a"/><circle cx="5.90" cy="14.40" r="0.55" fill="#3a3a3a"/><circle cx="8.42" cy="8.32" r="0.55" fill="#3a3a3a"/><circle cx="20.58" cy="8.32" r="0.55" fill="#3a3a3a"/><path d="M14.5 14.4L20.7 8.2M14.5 14.4V23.4" stroke="#3c4650" stroke-width="1"/><path d="M14.5 14.4H5.199999999999999" stroke="#a05060" stroke-width="1"/><circle cx="14.5" cy="14.4" r="1.1" fill="#fff" stroke="#3c4650" stroke-width="0.7"/></svg>
<svg style="position:absolute;left:1339px;top:143px;" width="13" height="13" viewBox="0 0 13 13"><circle cx="6.5" cy="6.5" r="6" fill="none" stroke="#a8a8a8" stroke-width="1"/><path d="M4 4L9 9M9 5.5V9H5.5" fill="none" stroke="#a0a0a0" stroke-width="1"/></svg>
<div style="position:absolute;left:317px;top:173px;width:42px;height:442px;box-sizing:border-box;"></div><div style="position:absolute;left:317px;top:173px;width:1042px;height:442px;box-sizing:border-box;border:1px solid #b4b4b4;background:#fff"></div><div style="position:absolute;left:1341px;top:174px;width:1px;height:440px;background:#b4b4b4"></div><svg style="position:absolute;left:1347px;top:181px;" width="7" height="4" viewBox="0 0 7 4"><path d="M0 3.5L3.5 0L7 3.5Z" fill="#707070"/></svg><div style="position:absolute;left:1346px;top:191px;width:8px;height:306px;background:#b9b9b9"></div><svg style="position:absolute;left:1347px;top:603px;" width="7" height="4" viewBox="0 0 7 4"><path d="M0 0L3.5 3.5L7 0Z" fill="#707070"/></svg><div class="t" style="left:325.5px;top:186.19px;font-size:11px;line-height:11px;color:#a6a6a6;font-weight:normal;letter-spacing:0.14px">Перетащите сюда заголовок колонки, чтобы сгруппировать по ней</div><div style="position:absolute;left:318px;top:208px;width:1023px;height:2px;background:#b4b4b4"></div><div style="position:absolute;left:318px;top:210px;width:911px;height:29px;background:#f4f4f4"></div><div style="position:absolute;left:318px;top:239px;width:911px;height:1px;background:#b7b7b7"></div><div style="position:absolute;left:329px;top:210px;width:1px;height:29px;background:#c8c8c8"></div><div style="position:absolute;left:482px;top:210px;width:1px;height:29px;background:#c8c8c8"></div><div style="position:absolute;left:697px;top:210px;width:1px;height:29px;background:#c8c8c8"></div><div style="position:absolute;left:846px;top:210px;width:1px;height:29px;background:#c8c8c8"></div><div style="position:absolute;left:956px;top:210px;width:1px;height:29px;background:#c8c8c8"></div><div style="position:absolute;left:1084px;top:210px;width:1px;height:29px;background:#c8c8c8"></div><div style="position:absolute;left:1229px;top:210px;width:1px;height:29px;background:#c8c8c8"></div><div class="t" style="left:331.5px;top:219.69px;font-size:11px;line-height:11px;color:#262626;font-weight:normal;">Статус</div><svg style="position:absolute;left:458.5px;top:216.5px;" width="15" height="15" viewBox="0 0 15 15"><circle cx="7.5" cy="7.5" r="7" fill="none" stroke="#bdbdbd" stroke-width="1.1"/><path d="M3.6 4.4Q7.5 3.2 11.4 4.4L8.2 8.2V12.2H6.8V8.2Z" fill="#a9a9a9"/><ellipse cx="7.5" cy="4.4" rx="2.6" ry="0.7" fill="#f2f2f2"/></svg><div class="t" style="left:484.5px;top:219.69px;font-size:11px;line-height:11px;color:#262626;font-weight:normal;">Порода</div><svg style="position:absolute;left:673.5px;top:216.5px;" width="15" height="15" viewBox="0 0 15 15"><circle cx="7.5" cy="7.5" r="7" fill="none" stroke="#bdbdbd" stroke-width="1.1"/><path d="M3.6 4.4Q7.5 3.2 11.4 4.4L8.2 8.2V12.2H6.8V8.2Z" fill="#a9a9a9"/><ellipse cx="7.5" cy="4.4" rx="2.6" ry="0.7" fill="#f2f2f2"/></svg><div class="t" style="left:699.5px;top:219.69px;font-size:11px;line-height:11px;color:#262626;font-weight:normal;">ИН</div><svg style="position:absolute;left:822.5px;top:216.5px;" width="15" height="15" viewBox="0 0 15 15"><circle cx="7.5" cy="7.5" r="7" fill="none" stroke="#bdbdbd" stroke-width="1.1"/><path d="M3.6 4.4Q7.5 3.2 11.4 4.4L8.2 8.2V12.2H6.8V8.2Z" fill="#a9a9a9"/><ellipse cx="7.5" cy="4.4" rx="2.6" ry="0.7" fill="#f2f2f2"/></svg><div class="t" style="left:848.5px;top:219.69px;font-size:11px;line-height:11px;color:#262626;font-weight:normal;">Кличка</div><svg style="position:absolute;left:932.5px;top:216.5px;" width="15" height="15" viewBox="0 0 15 15"><circle cx="7.5" cy="7.5" r="7" fill="none" stroke="#bdbdbd" stroke-width="1.1"/><path d="M3.6 4.4Q7.5 3.2 11.4 4.4L8.2 8.2V12.2H6.8V8.2Z" fill="#a9a9a9"/><ellipse cx="7.5" cy="4.4" rx="2.6" ry="0.7" fill="#f2f2f2"/></svg><div class="t" style="left:958.5px;top:219.69px;font-size:11px;line-height:11px;color:#262626;font-weight:normal;">Лет - месяцев</div><svg style="position:absolute;left:1060.5px;top:216.5px;" width="15" height="15" viewBox="0 0 15 15"><circle cx="7.5" cy="7.5" r="7" fill="none" stroke="#bdbdbd" stroke-width="1.1"/><path d="M3.6 4.4Q7.5 3.2 11.4 4.4L8.2 8.2V12.2H6.8V8.2Z" fill="#a9a9a9"/><ellipse cx="7.5" cy="4.4" rx="2.6" ry="0.7" fill="#f2f2f2"/></svg><div class="t" style="left:1086.5px;top:219.69px;font-size:11px;line-height:11px;color:#262626;font-weight:normal;">Месяцев всего</div><svg style="position:absolute;left:1205.5px;top:216.5px;" width="15" height="15" viewBox="0 0 15 15"><circle cx="7.5" cy="7.5" r="7" fill="none" stroke="#bdbdbd" stroke-width="1.1"/><path d="M3.6 4.4Q7.5 3.2 11.4 4.4L8.2 8.2V12.2H6.8V8.2Z" fill="#a9a9a9"/><ellipse cx="7.5" cy="4.4" rx="2.6" ry="0.7" fill="#f2f2f2"/></svg><div style="position:absolute;left:318px;top:240px;width:11px;height:35px;background:#f4f4f4"></div><div style="position:absolute;left:329px;top:240px;width:1px;height:35px;background:#c8c8c8"></div><div style="position:absolute;left:330px;top:240px;width:899px;height:35px;background:#d8effd"></div><div style="position:absolute;left:318px;top:274px;width:911px;height:1px;background:#b7b7b7"></div><svg style="position:absolute;left:348px;top:249px;" width="16" height="15" viewBox="0 0 16 15"><path d="M10.8 1.0A6.6 6.6 0 1 0 14.1 6.7" fill="none" stroke="#1a1e22" stroke-width="1.5"/><path d="M4.9 6.6L7.6 9.4L15.4 0.6" fill="none" stroke="#1a1e22" stroke-width="1.6" stroke-linejoin="miter"/></svg><div class="t" style="left:375.5px;top:251.69px;font-size:11px;line-height:11px;color:#262626;font-weight:normal;">Есть</div><div class="t" style="left:484.5px;top:251.69px;font-size:11px;line-height:11px;color:#262626;font-weight:normal;">Ахалтекинская порода</div><div class="t" style="left:699.5px;top:251.69px;font-size:11px;line-height:11px;color:#262626;font-weight:normal;">4575555330</div><div class="t" style="left:848.5px;top:251.69px;font-size:11px;line-height:11px;color:#262626;font-weight:normal;">Пегас</div><div class="t" style="left:958.5px;top:251.69px;font-size:11px;line-height:11px;color:#262626;font-weight:normal;">13 - 2</div><div class="t" style="left:1086.5px;top:251.69px;font-size:11px;line-height:11px;color:#262626;font-weight:normal;">158</div><div style="position:absolute;left:318px;top:275px;width:11px;height:35px;background:#f4f4f4"></div><div style="position:absolute;left:329px;top:275px;width:1px;height:35px;background:#c8c8c8"></div><div style="position:absolute;left:330px;top:275px;width:899px;height:35px;background:#ddf9e3"></div><div style="position:absolute;left:318px;top:309px;width:911px;height:1px;background:#b7b7b7"></div><svg style="position:absolute;left:348px;top:284px;" width="16" height="15" viewBox="0 0 16 15"><path d="M10.8 1.0A6.6 6.6 0 1 0 14.1 6.7" fill="none" stroke="#1a1e22" stroke-width="1.5"/><path d="M4.9 6.6L7.6 9.4L15.4 0.6" fill="none" stroke="#1a1e22" stroke-width="1.6" stroke-linejoin="miter"/></svg><div class="t" style="left:375.5px;top:286.69px;font-size:11px;line-height:11px;color:#262626;font-weight:normal;">Есть</div><div class="t" style="left:484.5px;top:286.69px;font-size:11px;line-height:11px;color:#262626;font-weight:normal;">Ахалтекинская порода</div><div class="t" style="left:699.5px;top:286.69px;font-size:11px;line-height:11px;color:#262626;font-weight:normal;">5665434344</div><div class="t" style="left:848.5px;top:286.69px;font-size:11px;line-height:11px;color:#262626;font-weight:normal;">Сивка</div><div class="t" style="left:958.5px;top:286.69px;font-size:11px;line-height:11px;color:#262626;font-weight:normal;">15 - 7</div><div class="t" style="left:1086.5px;top:286.69px;font-size:11px;line-height:11px;color:#262626;font-weight:normal;">187</div><div style="position:absolute;left:318px;top:310px;width:11px;height:35px;background:#f4f4f4"></div><div style="position:absolute;left:329px;top:310px;width:1px;height:35px;background:#c8c8c8"></div><div style="position:absolute;left:330px;top:310px;width:899px;height:35px;background:#d8effd"></div><div style="position:absolute;left:318px;top:344px;width:911px;height:1px;background:#b7b7b7"></div><svg style="position:absolute;left:348px;top:319px;" width="16" height="15" viewBox="0 0 16 15"><path d="M10.8 1.0A6.6 6.6 0 1 0 14.1 6.7" fill="none" stroke="#1a1e22" stroke-width="1.5"/><path d="M4.9 6.6L7.6 9.4L15.4 0.6" fill="none" stroke="#1a1e22" stroke-width="1.6" stroke-linejoin="miter"/></svg><div class="t" style="left:375.5px;top:321.69px;font-size:11px;line-height:11px;color:#262626;font-weight:normal;">Есть</div><div class="t" style="left:484.5px;top:321.69px;font-size:11px;line-height:11px;color:#262626;font-weight:normal;">Ахалтекинская порода</div><div class="t" style="left:699.5px;top:321.69px;font-size:11px;line-height:11px;color:#262626;font-weight:normal;">9325888885</div><div class="t" style="left:848.5px;top:321.69px;font-size:11px;line-height:11px;color:#262626;font-weight:normal;">Слейпнир</div><div class="t" style="left:958.5px;top:321.69px;font-size:11px;line-height:11px;color:#262626;font-weight:normal;">5 - 6</div><div class="t" style="left:1086.5px;top:321.69px;font-size:11px;line-height:11px;color:#262626;font-weight:normal;">66</div><div style="position:absolute;left:318px;top:345px;width:11px;height:35px;background:#f4f4f4"></div><div style="position:absolute;left:329px;top:345px;width:1px;height:35px;background:#c8c8c8"></div><div style="position:absolute;left:330px;top:345px;width:899px;height:35px;background:#ddf9e3"></div><div style="position:absolute;left:318px;top:379px;width:911px;height:1px;background:#b7b7b7"></div><svg style="position:absolute;left:348px;top:354px;" width="16" height="15" viewBox="0 0 16 15"><path d="M10.8 1.0A6.6 6.6 0 1 0 14.1 6.7" fill="none" stroke="#1a1e22" stroke-width="1.5"/><path d="M4.9 6.6L7.6 9.4L15.4 0.6" fill="none" stroke="#1a1e22" stroke-width="1.6" stroke-linejoin="miter"/></svg><div class="t" style="left:375.5px;top:356.69px;font-size:11px;line-height:11px;color:#262626;font-weight:normal;">Есть</div><div class="t" style="left:484.5px;top:356.69px;font-size:11px;line-height:11px;color:#262626;font-weight:normal;">Голштинская порода</div><div class="t" style="left:699.5px;top:356.69px;font-size:11px;line-height:11px;color:#262626;font-weight:normal;">009852223</div><div class="t" style="left:958.5px;top:356.69px;font-size:11px;line-height:11px;color:#262626;font-weight:normal;">8 - 3</div><div class="t" style="left:1086.5px;top:356.69px;font-size:11px;line-height:11px;color:#262626;font-weight:normal;">99</div><div style="position:absolute;left:318px;top:380px;width:11px;height:35px;background:#f4f4f4"></div><div style="position:absolute;left:329px;top:380px;width:1px;height:35px;background:#c8c8c8"></div><div style="position:absolute;left:330px;top:380px;width:899px;height:35px;background:#d8effd"></div><div style="position:absolute;left:318px;top:414px;width:911px;height:1px;background:#b7b7b7"></div><svg style="position:absolute;left:348px;top:389px;" width="16" height="15" viewBox="0 0 16 15"><path d="M10.8 1.0A6.6 6.6 0 1 0 14.1 6.7" fill="none" stroke="#1a1e22" stroke-width="1.5"/><path d="M4.9 6.6L7.6 9.4L15.4 0.6" fill="none" stroke="#1a1e22" stroke-width="1.6" stroke-linejoin="miter"/></svg><div class="t" style="left:375.5px;top:391.69px;font-size:11px;line-height:11px;color:#262626;font-weight:normal;">Есть</div><div class="t" style="left:484.5px;top:391.69px;font-size:11px;line-height:11px;color:#262626;font-weight:normal;">Голштинская порода</div><div class="t" style="left:699.5px;top:391.69px;font-size:11px;line-height:11px;color:#262626;font-weight:normal;">009852315</div><div class="t" style="left:958.5px;top:391.69px;font-size:11px;line-height:11px;color:#262626;font-weight:normal;">7 - 11</div><div class="t" style="left:1086.5px;top:391.69px;font-size:11px;line-height:11px;color:#262626;font-weight:normal;">95</div><div style="position:absolute;left:318px;top:415px;width:11px;height:35px;background:#f4f4f4"></div><div style="position:absolute;left:329px;top:415px;width:1px;height:35px;background:#c8c8c8"></div><div style="position:absolute;left:330px;top:415px;width:899px;height:35px;background:#ddf9e3"></div><div style="position:absolute;left:318px;top:449px;width:911px;height:1px;background:#b7b7b7"></div><svg style="position:absolute;left:348px;top:424px;" width="16" height="15" viewBox="0 0 16 15"><path d="M10.8 1.0A6.6 6.6 0 1 0 14.1 6.7" fill="none" stroke="#1a1e22" stroke-width="1.5"/><path d="M4.9 6.6L7.6 9.4L15.4 0.6" fill="none" stroke="#1a1e22" stroke-width="1.6" stroke-linejoin="miter"/></svg><div class="t" style="left:375.5px;top:426.69px;font-size:11px;line-height:11px;color:#262626;font-weight:normal;">Есть</div><div class="t" style="left:484.5px;top:426.69px;font-size:11px;line-height:11px;color:#262626;font-weight:normal;">Голштинская порода</div><div class="t" style="left:699.5px;top:426.69px;font-size:11px;line-height:11px;color:#262626;font-weight:normal;">009888463</div><div class="t" style="left:958.5px;top:426.69px;font-size:11px;line-height:11px;color:#262626;font-weight:normal;">6 - 11</div><div class="t" style="left:1086.5px;top:426.69px;font-size:11px;line-height:11px;color:#262626;font-weight:normal;">83</div><div style="position:absolute;left:318px;top:450px;width:11px;height:35px;background:#f4f4f4"></div><div style="position:absolute;left:329px;top:450px;width:1px;height:35px;background:#c8c8c8"></div><div style="position:absolute;left:330px;top:450px;width:899px;height:35px;background:#c0c0c0"></div><div style="position:absolute;left:318px;top:484px;width:911px;height:1px;background:#b7b7b7"></div><svg style="position:absolute;left:347px;top:459px;" width="15" height="15" viewBox="0 0 15 15"><circle cx="7.5" cy="7.5" r="6.9" fill="none" stroke="#1e1e1e" stroke-width="1.25"/><path d="M3.9 3.9L11.1 11.1M11.1 3.9L3.9 11.1" stroke="#1e1e1e" stroke-width="1.1"/></svg><div class="t" style="left:375.5px;top:461.69px;font-size:11px;line-height:11px;color:#7f7f7f;font-weight:normal;">Нет</div><div class="t" style="left:484.5px;top:461.69px;font-size:11px;line-height:11px;color:#7f7f7f;font-weight:normal;">Голштинская порода</div><div class="t" style="left:699.5px;top:461.69px;font-size:11px;line-height:11px;color:#7f7f7f;font-weight:normal;">009898533</div><div class="t" style="left:958.5px;top:461.69px;font-size:11px;line-height:11px;color:#7f7f7f;font-weight:normal;">0 - 11</div><div class="t" style="left:1086.5px;top:461.69px;font-size:11px;line-height:11px;color:#7f7f7f;font-weight:normal;">11</div><div style="position:absolute;left:318px;top:485px;width:11px;height:35px;background:#f4f4f4"></div><div style="position:absolute;left:329px;top:485px;width:1px;height:35px;background:#c8c8c8"></div><div style="position:absolute;left:330px;top:485px;width:899px;height:35px;background:#ddf9e3"></div><div style="position:absolute;left:318px;top:519px;width:911px;height:1px;background:#b7b7b7"></div><svg style="position:absolute;left:348px;top:494px;" width="16" height="15" viewBox="0 0 16 15"><path d="M10.8 1.0A6.6 6.6 0 1 0 14.1 6.7" fill="none" stroke="#1a1e22" stroke-width="1.5"/><path d="M4.9 6.6L7.6 9.4L15.4 0.6" fill="none" stroke="#1a1e22" stroke-width="1.6" stroke-linejoin="miter"/></svg><div class="t" style="left:375.5px;top:496.69px;font-size:11px;line-height:11px;color:#262626;font-weight:normal;">Есть</div><div class="t" style="left:484.5px;top:496.69px;font-size:11px;line-height:11px;color:#262626;font-weight:normal;">Джерсейская порода</div><div class="t" style="left:699.5px;top:496.69px;font-size:11px;line-height:11px;color:#262626;font-weight:normal;">013011111</div><div class="t" style="left:958.5px;top:496.69px;font-size:11px;line-height:11px;color:#262626;font-weight:normal;">4 - 8</div><div class="t" style="left:1086.5px;top:496.69px;font-size:11px;line-height:11px;color:#262626;font-weight:normal;">56</div><div style="position:absolute;left:318px;top:520px;width:11px;height:35px;background:#f4f4f4"></div><div style="position:absolute;left:329px;top:520px;width:1px;height:35px;background:#c8c8c8"></div><div style="position:absolute;left:330px;top:520px;width:899px;height:35px;background:#d8effd"></div><div style="position:absolute;left:318px;top:554px;width:911px;height:1px;background:#b7b7b7"></div><svg style="position:absolute;left:348px;top:529px;" width="16" height="15" viewBox="0 0 16 15"><path d="M10.8 1.0A6.6 6.6 0 1 0 14.1 6.7" fill="none" stroke="#1a1e22" stroke-width="1.5"/><path d="M4.9 6.6L7.6 9.4L15.4 0.6" fill="none" stroke="#1a1e22" stroke-width="1.6" stroke-linejoin="miter"/></svg><div class="t" style="left:375.5px;top:531.69px;font-size:11px;line-height:11px;color:#262626;font-weight:normal;">Есть</div><div class="t" style="left:484.5px;top:531.69px;font-size:11px;line-height:11px;color:#262626;font-weight:normal;">Джерсейская порода</div><div class="t" style="left:699.5px;top:531.69px;font-size:11px;line-height:11px;color:#262626;font-weight:normal;">013011750</div><div class="t" style="left:958.5px;top:531.69px;font-size:11px;line-height:11px;color:#262626;font-weight:normal;">6 - 7</div><div class="t" style="left:1086.5px;top:531.69px;font-size:11px;line-height:11px;color:#262626;font-weight:normal;">79</div><div style="position:absolute;left:318px;top:555px;width:11px;height:30px;background:#f4f4f4"></div><div style="position:absolute;left:329px;top:555px;width:1px;height:30px;background:#c8c8c8"></div><div style="position:absolute;left:330px;top:555px;width:899px;height:30px;background:#c0c0c0"></div><svg style="position:absolute;left:347px;top:564px;" width="15" height="15" viewBox="0 0 15 15"><circle cx="7.5" cy="7.5" r="6.9" fill="none" stroke="#1e1e1e" stroke-width="1.25"/><path d="M3.9 3.9L11.1 11.1M11.1 3.9L3.9 11.1" stroke="#1e1e1e" stroke-width="1.1"/></svg><div class="t" style="left:375.5px;top:566.69px;font-size:11px;line-height:11px;color:#7f7f7f;font-weight:normal;">Нет</div><div class="t" style="left:484.5px;top:566.69px;font-size:11px;line-height:11px;color:#7f7f7f;font-weight:normal;">Джерсейская порода</div><div class="t" style="left:699.5px;top:566.69px;font-size:11px;line-height:11px;color:#7f7f7f;font-weight:normal;">013011450</div><div class="t" style="left:958.5px;top:566.69px;font-size:11px;line-height:11px;color:#7f7f7f;font-weight:normal;">3 - 7</div><div class="t" style="left:1086.5px;top:566.69px;font-size:11px;line-height:11px;color:#7f7f7f;font-weight:normal;">43</div><svg style="position:absolute;left:322px;top:254px;" width="5" height="8" viewBox="0 0 5 8"><path d="M0 0L4.5 4L0 8Z" fill="#555"/></svg><div style="position:absolute;left:318px;top:584px;width:911px;height:30px;background:#f5f5f5"></div><div style="position:absolute;left:1229px;top:584px;width:1px;height:30px;background:#c4c4c4"></div><div style="position:absolute;left:318px;top:613px;width:1023px;height:1px;background:#bdbdbd"></div><div style="position:absolute;left:830px;top:618px;width:16px;height:1px;background:repeating-linear-gradient(to right,#3a3a3a 0 1px,transparent 1px 2px)"></div>
<div style="position:absolute;left:317px;top:658px;width:1042px;height:304px;box-sizing:border-box;border:1px solid #b9b9b9;background:#fff"></div><div style="position:absolute;left:319px;top:660px;width:1038px;height:297px;box-sizing:border-box;border:1px solid #b9b9b9;background:#fff"></div><div style="position:absolute;left:318px;top:957px;width:1040px;height:1px;background:#bdbdbd"></div><div style="position:absolute;left:318px;top:623px;width:78px;height:37px;box-sizing:border-box;border-left:1px solid #b9b9b9;border-right:1px solid #b9b9b9;background:#fff"></div><div style="position:absolute;left:318px;top:623px;width:78px;height:2px;background:#1f8fd3"></div><svg style="position:absolute;left:330px;top:634px;" width="12" height="14" viewBox="0 0 12 14"><defs><linearGradient id="bkr" x1="0" y1="0" x2="0.25" y2="1"><stop offset="0" stop-color="#dcecfb"/><stop offset="1" stop-color="#74a6e0"/></linearGradient><linearGradient id="bkrs" x1="0" y1="0" x2="1" y2="0"><stop offset="0" stop-color="#3a4a68"/><stop offset="1" stop-color="#27365a"/></linearGradient></defs><rect x="0.5" y="0.5" width="11" height="13" rx="1.8" fill="url(#bkr)" stroke="#3b4a62" stroke-width="0.9"/><rect x="0.5" y="0.5" width="2.5" height="13" rx="1.2" fill="url(#bkrs)"/><rect x="3.0" y="1" width="8.0" height="1.4" fill="#f6f9fd"/><path d="M3.0 2.7H11" stroke="#8597ae" stroke-width="0.7"/></svg><div class="t" style="left:349.5px;top:636.69px;font-size:11px;line-height:11px;color:#1f8fd3;font-weight:normal;">Рацион</div><div class="t" style="left:327.5px;top:673.69px;font-size:11px;line-height:11px;color:#a6a6a6;font-weight:normal;letter-spacing:0.14px">Перетащите сюда заголовок колонки, чтобы сгруппировать по ней</div><div style="position:absolute;left:320px;top:695px;width:1036px;height:2px;background:#b4b4b4"></div><div style="position:absolute;left:320px;top:697px;width:842px;height:29px;background:#f4f4f4"></div><div style="position:absolute;left:320px;top:726px;width:842px;height:1px;background:#b7b7b7"></div><div style="position:absolute;left:331px;top:697px;width:1px;height:29px;background:#c8c8c8"></div><div style="position:absolute;left:492px;top:697px;width:1px;height:29px;background:#c8c8c8"></div><div style="position:absolute;left:592px;top:697px;width:1px;height:29px;background:#c8c8c8"></div><div style="position:absolute;left:692px;top:697px;width:1px;height:29px;background:#c8c8c8"></div><div style="position:absolute;left:862px;top:697px;width:1px;height:29px;background:#c8c8c8"></div><div style="position:absolute;left:962px;top:697px;width:1px;height:29px;background:#c8c8c8"></div><div style="position:absolute;left:1162px;top:697px;width:1px;height:29px;background:#c8c8c8"></div><div class="t" style="left:333.5px;top:706.69px;font-size:11px;line-height:11px;color:#262626;font-weight:normal;">Статус</div><svg style="position:absolute;left:468.5px;top:704px;" width="15" height="15" viewBox="0 0 15 15"><circle cx="7.5" cy="7.5" r="7" fill="none" stroke="#bdbdbd" stroke-width="1.1"/><path d="M3.6 4.4Q7.5 3.2 11.4 4.4L8.2 8.2V12.2H6.8V8.2Z" fill="#a9a9a9"/><ellipse cx="7.5" cy="4.4" rx="2.6" ry="0.7" fill="#f2f2f2"/></svg><div class="t" style="left:494.5px;top:706.69px;font-size:11px;line-height:11px;color:#262626;font-weight:normal;">От даты</div><svg style="position:absolute;left:568.5px;top:704px;" width="15" height="15" viewBox="0 0 15 15"><circle cx="7.5" cy="7.5" r="7" fill="none" stroke="#bdbdbd" stroke-width="1.1"/><path d="M3.6 4.4Q7.5 3.2 11.4 4.4L8.2 8.2V12.2H6.8V8.2Z" fill="#a9a9a9"/><ellipse cx="7.5" cy="4.4" rx="2.6" ry="0.7" fill="#f2f2f2"/></svg><div class="t" style="left:594.5px;top:706.69px;font-size:11px;line-height:11px;color:#262626;font-weight:normal;">До даты</div><svg style="position:absolute;left:668.5px;top:704px;" width="15" height="15" viewBox="0 0 15 15"><circle cx="7.5" cy="7.5" r="7" fill="none" stroke="#bdbdbd" stroke-width="1.1"/><path d="M3.6 4.4Q7.5 3.2 11.4 4.4L8.2 8.2V12.2H6.8V8.2Z" fill="#a9a9a9"/><ellipse cx="7.5" cy="4.4" rx="2.6" ry="0.7" fill="#f2f2f2"/></svg><div class="t" style="left:694.5px;top:706.69px;font-size:11px;line-height:11px;color:#262626;font-weight:normal;">Корм</div><svg style="position:absolute;left:838.5px;top:704px;" width="15" height="15" viewBox="0 0 15 15"><circle cx="7.5" cy="7.5" r="7" fill="none" stroke="#bdbdbd" stroke-width="1.1"/><path d="M3.6 4.4Q7.5 3.2 11.4 4.4L8.2 8.2V12.2H6.8V8.2Z" fill="#a9a9a9"/><ellipse cx="7.5" cy="4.4" rx="2.6" ry="0.7" fill="#f2f2f2"/></svg><div class="t" style="left:864.5px;top:706.69px;font-size:11px;line-height:11px;color:#262626;font-weight:normal;">Норма в д...</div><svg style="position:absolute;left:938.5px;top:704px;" width="15" height="15" viewBox="0 0 15 15"><circle cx="7.5" cy="7.5" r="7" fill="none" stroke="#bdbdbd" stroke-width="1.1"/><path d="M3.6 4.4Q7.5 3.2 11.4 4.4L8.2 8.2V12.2H6.8V8.2Z" fill="#a9a9a9"/><ellipse cx="7.5" cy="4.4" rx="2.6" ry="0.7" fill="#f2f2f2"/></svg><div class="t" style="left:964.5px;top:706.69px;font-size:11px;line-height:11px;color:#262626;font-weight:normal;">Примечание</div><svg style="position:absolute;left:1138.5px;top:704px;" width="15" height="15" viewBox="0 0 15 15"><circle cx="7.5" cy="7.5" r="7" fill="none" stroke="#bdbdbd" stroke-width="1.1"/><path d="M3.6 4.4Q7.5 3.2 11.4 4.4L8.2 8.2V12.2H6.8V8.2Z" fill="#a9a9a9"/><ellipse cx="7.5" cy="4.4" rx="2.6" ry="0.7" fill="#f2f2f2"/></svg><div style="position:absolute;left:320px;top:727px;width:11px;height:35px;background:#f4f4f4"></div><div style="position:absolute;left:331px;top:727px;width:1px;height:35px;background:#c8c8c8"></div><div style="position:absolute;left:332px;top:727px;width:830px;height:35px;background:#c0c0c0"></div><div style="position:absolute;left:320px;top:761px;width:842px;height:1px;background:#b7b7b7"></div><svg style="position:absolute;left:349px;top:734.5px;" width="16" height="16" viewBox="0 0 16 16"><circle cx="8" cy="8" r="8" fill="#111"/><path d="M8 3.2V9.4" stroke="#fff" stroke-width="2.4" stroke-linecap="round"/><circle cx="8" cy="12.3" r="1.3" fill="#fff"/></svg><div class="t" style="left:377.5px;top:738.69px;font-size:11px;line-height:11px;color:#7f7f7f;font-weight:normal;">Неактуальный</div><div class="t" style="left:494.5px;top:738.69px;font-size:11px;line-height:11px;color:#7f7f7f;font-weight:normal;">09.05.2018</div><div class="t" style="left:594.5px;top:738.69px;font-size:11px;line-height:11px;color:#7f7f7f;font-weight:normal;">01.07.2018</div><div class="t" style="left:694.5px;top:738.69px;font-size:11px;line-height:11px;color:#7f7f7f;font-weight:normal;">10023 Сенаж, кг</div><div class="t" style="left:864.5px;top:738.69px;font-size:11px;line-height:11px;color:#7f7f7f;font-weight:normal;">6.000</div><div style="position:absolute;left:320px;top:762px;width:11px;height:35px;background:#f4f4f4"></div><div style="position:absolute;left:331px;top:762px;width:1px;height:35px;background:#c8c8c8"></div><div style="position:absolute;left:332px;top:762px;width:830px;height:35px;background:#ddf9e3"></div><div style="position:absolute;left:320px;top:796px;width:842px;height:1px;background:#b7b7b7"></div><svg style="position:absolute;left:349.5px;top:770px;" width="15" height="13" viewBox="0 0 15 13"><path d="M1.9 9L4.9 12.1L13 3.5" fill="none" stroke="#0c0c0c" stroke-width="2.3" stroke-linecap="butt"/></svg><div class="t" style="left:377.5px;top:773.69px;font-size:11px;line-height:11px;color:#1a1a1a;font-weight:normal;">Актуальный</div><div class="t" style="left:494.5px;top:773.69px;font-size:11px;line-height:11px;color:#1a1a1a;font-weight:normal;">01.07.2018</div><div class="t" style="left:694.5px;top:773.69px;font-size:11px;line-height:11px;color:#1a1a1a;font-weight:normal;">10025 Морковь, кг</div><div class="t" style="left:864.5px;top:773.69px;font-size:11px;line-height:11px;color:#1a1a1a;font-weight:normal;">2.000</div><div style="position:absolute;left:320px;top:797px;width:11px;height:35px;background:#f4f4f4"></div><div style="position:absolute;left:331px;top:797px;width:1px;height:35px;background:#c8c8c8"></div><div style="position:absolute;left:332px;top:797px;width:830px;height:35px;background:#d8effd"></div><div style="position:absolute;left:320px;top:831px;width:842px;height:1px;background:#b7b7b7"></div><svg style="position:absolute;left:349.5px;top:805px;" width="15" height="13" viewBox="0 0 15 13"><path d="M1.9 9L4.9 12.1L13 3.5" fill="none" stroke="#0c0c0c" stroke-width="2.3" stroke-linecap="butt"/></svg><div class="t" style="left:377.5px;top:808.69px;font-size:11px;line-height:11px;color:#1a1a1a;font-weight:normal;">Актуальный</div><div class="t" style="left:494.5px;top:808.69px;font-size:11px;line-height:11px;color:#1a1a1a;font-weight:normal;">02.07.2019</div><div class="t" style="left:694.5px;top:808.69px;font-size:11px;line-height:11px;color:#1a1a1a;font-weight:normal;">10023 Сенаж, кг</div><div class="t" style="left:864.5px;top:808.69px;font-size:11px;line-height:11px;color:#1a1a1a;font-weight:normal;">5.500</div><div style="position:absolute;left:320px;top:832px;width:11px;height:35px;background:#f4f4f4"></div><div style="position:absolute;left:331px;top:832px;width:1px;height:35px;background:#c8c8c8"></div><div style="position:absolute;left:332px;top:832px;width:830px;height:35px;background:#ddf9e3"></div><div style="position:absolute;left:320px;top:866px;width:842px;height:1px;background:#b7b7b7"></div><svg style="position:absolute;left:349.5px;top:840px;" width="15" height="13" viewBox="0 0 15 13"><path d="M1.9 9L4.9 12.1L13 3.5" fill="none" stroke="#0c0c0c" stroke-width="2.3" stroke-linecap="butt"/></svg><div class="t" style="left:377.5px;top:843.69px;font-size:11px;line-height:11px;color:#1a1a1a;font-weight:normal;">Актуальный</div><div class="t" style="left:494.5px;top:843.69px;font-size:11px;line-height:11px;color:#1a1a1a;font-weight:normal;">23.05.2018</div><div class="t" style="left:694.5px;top:843.69px;font-size:11px;line-height:11px;color:#1a1a1a;font-weight:normal;">10022 Сено, кг</div><div class="t" style="left:864.5px;top:843.69px;font-size:11px;line-height:11px;color:#1a1a1a;font-weight:normal;">30.000</div><svg style="position:absolute;left:322px;top:740px;" width="5" height="8" viewBox="0 0 5 8"><path d="M0 0L4.5 4L0 8Z" fill="#555"/></svg><div style="position:absolute;left:320px;top:924px;width:843px;height:31px;box-sizing:border-box;border-top:1px solid #c4c4c4;border-right:1px solid #c4c4c4;background:#f4f4f4"></div>
<div style="position:absolute;left:18px;top:961px;width:1341px;height:1px;background:#b9b9b9"></div><div style="position:absolute;left:18px;top:958px;width:143px;height:44px;box-sizing:border-box;border:1px solid #c4c4c4;border-bottom:none;background:#fff"></div><div style="position:absolute;left:18px;top:1000px;width:143px;height:2px;background:#2a90d2"></div><svg style="position:absolute;left:32px;top:967px;" width="24" height="27" viewBox="0 0 24 27"><defs><linearGradient id="bkm" x1="0" y1="0" x2="0.25" y2="1"><stop offset="0" stop-color="#dcecfb"/><stop offset="1" stop-color="#74a6e0"/></linearGradient><linearGradient id="bkms" x1="0" y1="0" x2="1" y2="0"><stop offset="0" stop-color="#3a4a68"/><stop offset="1" stop-color="#27365a"/></linearGradient></defs><rect x="0.5" y="0.5" width="23" height="26" rx="1.8" fill="url(#bkm)" stroke="#3b4a62" stroke-width="0.9"/><rect x="0.5" y="0.5" width="4.3" height="26" rx="1.2" fill="url(#bkms)"/><rect x="4.8" y="1" width="18.2" height="2.7" fill="#f6f9fd"/><path d="M4.8 4.0H23" stroke="#8597ae" stroke-width="0.7"/></svg><div class="t" style="left:65.5px;top:975.52px;font-size:11.2px;line-height:11.2px;color:#1f8fd3;font-weight:normal;">Животные</div><svg style="position:absolute;left:135px;top:976px;" width="9" height="9" viewBox="0 0 9 9"><path d="M1 1L8 8M8 1L1 8" stroke="#1f8fd3" stroke-width="1.8"/></svg><svg style="position:absolute;left:23px;top:1005px;" width="16" height="16" viewBox="0 0 16 16"><defs><radialGradient id="ifs" cx="0.4" cy="0.35" r="0.7"><stop offset="0" stop-color="#7fb0e0"/><stop offset="1" stop-color="#3d75b8"/></radialGradient></defs><circle cx="8" cy="8" r="7.6" fill="url(#ifs)"/><circle cx="8" cy="4.4" r="1.3" fill="#fff"/><path d="M6.6 6.8H8.9V11.8H9.8V12.6H6.4V11.8H7.2V7.6H6.6Z" fill="#fff"/></svg><div class="t" style="left:56.5px;top:1008.69px;font-size:11px;line-height:11px;color:#333;font-weight:normal;">7.2.9000.10 Standard</div><div style="position:absolute;left:183px;top:1006px;width:1px;height:15px;background:#b9b9b9"></div><svg style="position:absolute;left:195px;top:1004px;" width="12" height="16" viewBox="0 0 12 16"><defs><linearGradient id="dbg" x1="0" y1="0" x2="1" y2="0"><stop offset="0" stop-color="#e8902a"/><stop offset="0.5" stop-color="#fcd78c"/><stop offset="1" stop-color="#e08a25"/></linearGradient></defs><path d="M0.5 2.5Q0.5 0.5 6 0.5Q11.5 0.5 11.5 2.5V13.5Q11.5 15.5 6 15.5Q0.5 15.5 0.5 13.5Z" fill="url(#dbg)" stroke="#b86a1a" stroke-width="0.8"/><path d="M0.5 6Q6 8 11.5 6M0.5 10Q6 12 11.5 10M0.5 2.5Q6 4.5 11.5 2.5" fill="none" stroke="#b86a1a" stroke-width="0.8"/></svg><div class="t" style="left:225.5px;top:1008.69px;font-size:11px;line-height:11px;color:#333;font-weight:normal;letter-spacing:-0.1px">localhost (win1251)</div><div style="position:absolute;left:340px;top:1006px;width:1px;height:15px;background:#b9b9b9"></div><svg style="position:absolute;left:349px;top:1006px;" width="15" height="15" viewBox="0 0 15 15"><g transform="scale(1.0)"><defs><linearGradient id="usg" x1="0" y1="0" x2="0" y2="1"><stop offset="0" stop-color="#c8ec86"/><stop offset="1" stop-color="#5c9a30"/></linearGradient></defs><ellipse cx="7.5" cy="11.6" rx="7" ry="3.2" fill="url(#usg)" stroke="#3f6e22" stroke-width="0.8"/><path d="M3.6 5.5Q3.6 1 7.5 1Q11.4 1 11.4 5.5Q11.4 8.5 10.2 10Q8.8 11.2 7.5 11.2Q6.2 11.2 4.8 10Q3.6 8.5 3.6 5.5Z" fill="#8e5a34" stroke="#6b4426" stroke-width="0.6"/><path d="M5 6Q5.5 4.6 7.5 4.4Q9.6 4.6 10 6V8.5Q9 10.5 7.5 10.6Q6 10.5 5 8.5Z" fill="#f6c9a0"/></g></svg><div class="t" style="left:381px;top:1008.69px;font-size:11px;line-height:11px;color:#333;font-weight:normal;letter-spacing:-0.28px">NIKOLAY (MAIN)</div><div style="position:absolute;left:482px;top:1006px;width:1px;height:15px;background:#b9b9b9"></div><svg style="position:absolute;left:493px;top:1006px;" width="15" height="15" viewBox="0 0 15 15"><rect x="0.5" y="0.5" width="14" height="14" fill="#fff" stroke="#7a8fb0" stroke-width="1"/><rect x="0.5" y="0.5" width="14" height="3" fill="#d94d4d"/><text x="7.5" y="13" font-family="Liberation Sans" font-weight="bold" font-size="9" fill="#2b4d8a" text-anchor="middle">31</text></svg><div class="t" style="left:526px;top:1008.69px;font-size:11px;line-height:11px;color:#333;font-weight:normal;">17.08.2023</div><div style="position:absolute;left:601px;top:1006px;width:1px;height:15px;background:#b9b9b9"></div><div class="t" style="left:629.5px;top:1008.69px;font-size:11px;line-height:11px;color:#333;font-weight:normal;letter-spacing:0.18px">0:00:00:081</div><div style="position:absolute;left:715px;top:1006px;width:1px;height:15px;background:#b9b9b9"></div><div style="position:absolute;left:1335px;top:1006px;width:1px;height:15px;background:#b9b9b9"></div><svg style="position:absolute;left:1346px;top:1011px;" width="12" height="11" viewBox="0 0 12 11"><rect x="10" y="0" width="2" height="2" fill="#9a9a9a"/><rect x="7" y="3" width="2" height="2" fill="#9a9a9a"/><rect x="10" y="3" width="2" height="2" fill="#9a9a9a"/><rect x="4" y="6" width="2" height="2" fill="#9a9a9a"/><rect x="7" y="6" width="2" height="2" fill="#9a9a9a"/><rect x="10" y="6" width="2" height="2" fill="#9a9a9a"/><rect x="1" y="9" width="2" height="2" fill="#9a9a9a"/><rect x="4" y="9" width="2" height="2" fill="#9a9a9a"/><rect x="7" y="9" width="2" height="2" fill="#9a9a9a"/><rect x="10" y="9" width="2" height="2" fill="#9a9a9a"/></svg>
</body></html>
